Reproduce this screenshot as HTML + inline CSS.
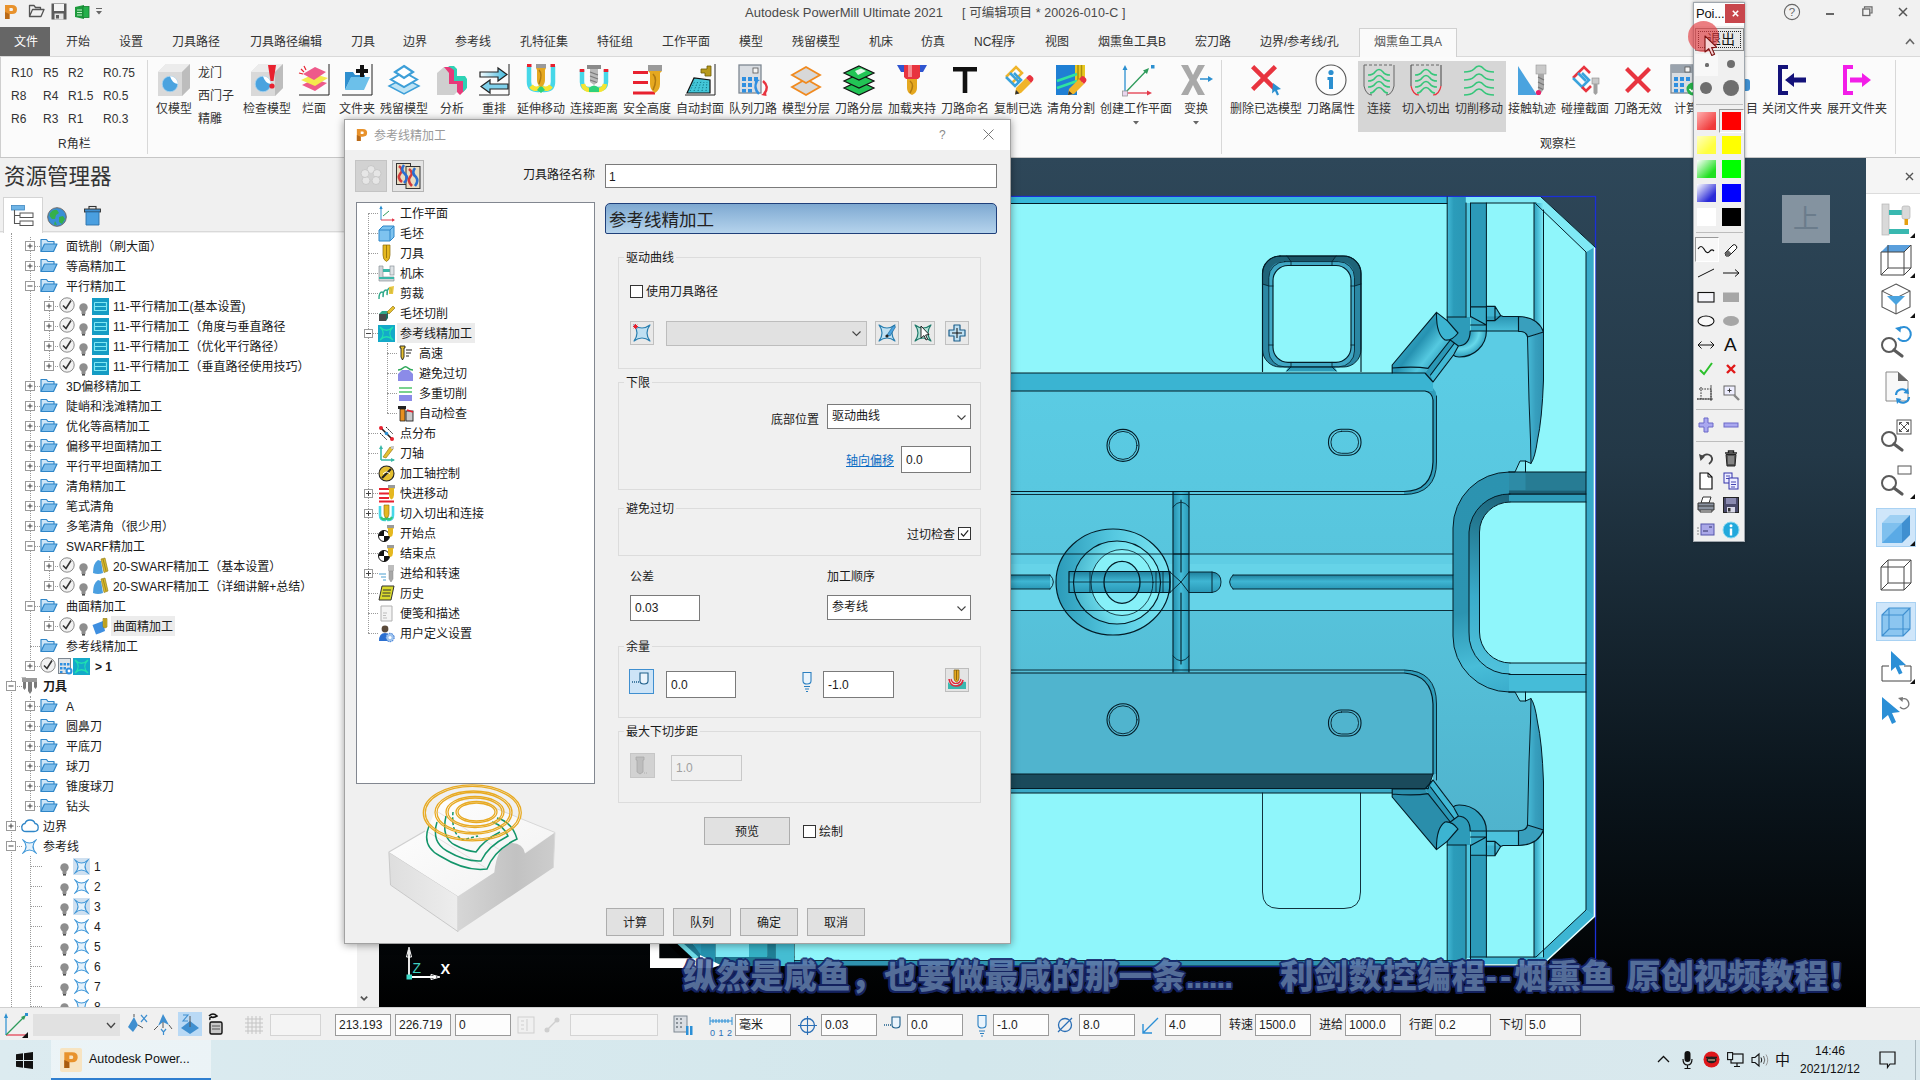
<!DOCTYPE html>
<html lang="zh-CN"><head><meta charset="utf-8"><title>Autodesk PowerMill Ultimate 2021</title>
<style>
*{box-sizing:border-box}
html,body{margin:0;padding:0}
body{width:1920px;height:1080px;overflow:hidden;position:relative;background:#f0f0f0;font-family:"Liberation Sans","Noto Sans CJK SC",sans-serif;font-size:12px;color:#1a1a1a;line-height:1}
.a{position:absolute}
.t{position:absolute;white-space:nowrap;line-height:16px;height:16px}
svg{position:absolute;overflow:visible}
#titlebar{left:0;top:0;width:1920px;height:28px;background:#f1f1f1}
#tabrow{left:0;top:28px;width:1920px;height:29px;background:#f1f1f1;border-bottom:1px solid #d9d9d9}
#ribbon{left:0;top:57px;width:1920px;height:101px;background:#fbfbfb;border-bottom:1px solid #c6c6c6;box-shadow:inset 1px 0 0 #cfcfcf}
#gap{display:none}
#left{left:0;top:158px;width:379px;height:849px;background:#f0f0f0}
#tree{left:0;top:233px;width:376px;height:774px;background:#fff;overflow:hidden}
#viewport{left:379px;top:158px;width:1487px;height:849px;background:linear-gradient(#2e4759 0%,#233847 35%,#0a141b 75%,#000 100%);overflow:hidden}
#rtool{left:1866px;top:158px;width:54px;height:849px;background:#fff}
#status{left:0;top:1007px;width:1920px;height:33px;background:#f0f0f0;border-top:1px solid #d0d0d0}
#taskbar{left:0;top:1040px;width:1920px;height:40px;background:linear-gradient(90deg,#dcebf0,#d3e7ec 50%,#dbe9ee)}
#dialog{left:344px;top:119px;width:667px;height:825px;background:#f0f0f0;border:1px solid #a2a2a2;box-shadow:0 1px 8px rgba(0,0,0,.4)}

#dialog .t{margin-top:1px}

</style></head>
<body>
<div id="titlebar" class="a">
<svg style="left:4px;top:3px" width="14" height="17" viewBox="0 0 14 17"><path d="M1,16 V2 H8 Q13,2 13,6.5 Q13,11 8,11 H5.5 V16Z M5.5,5 V8 H8 Q9,8 9,6.5 Q9,5 8,5Z" fill="#e8922c" fill-rule="evenodd"/><path d="M1,16 V9 L5.5,11 V16Z" fill="#b96a18"/></svg>
<svg style="left:28px;top:4px" width="17" height="14" viewBox="0 0 17 14"><path d="M1.5,12.5 V1.5 H6 L7.5,3.5 H12.5 V5.5 M1.5,12.5 L4.5,5.5 H16 L13,12.5Z" fill="none" stroke="#555" stroke-width="1.3" stroke-linejoin="round"/></svg>
<svg style="left:51px;top:3px" width="16" height="17" viewBox="0 0 16 17"><rect x="0.5" y="0.5" width="15" height="16" fill="#5b5b5b"/><rect x="3" y="1" width="10" height="7" fill="#f4f4f4"/><rect x="3.5" y="10.5" width="9" height="6" fill="#e4e4e4"/><rect x="5" y="12" width="3" height="3.5" fill="#5b5b5b"/></svg>
<svg style="left:74px;top:4px" width="16" height="16" viewBox="0 0 16 16"><path d="M1,3 L10,1 V15 L1,13Z" fill="#1d9a3c"/><rect x="9" y="2.5" width="6" height="11" fill="#23b04a" stroke="#167a2f" stroke-width=".8"/><path d="M3,6 H8 M3,8.5 H8 M3,11 H8" stroke="#bff0c8" stroke-width="1"/></svg>
<svg style="left:95px;top:8px" width="8" height="8" viewBox="0 0 8 8"><path d="M1,0.5 H7" stroke="#666" stroke-width="1"/><path d="M1,3 H7 L4,6.5Z" fill="#666"/></svg>
<div class="t" style="left:745px;top:5px;font-size:13px;color:#4a4a4a;letter-spacing:0">Autodesk PowerMill Ultimate 2021</div>
<div class="t" style="left:962px;top:5px;font-size:12.5px;color:#4a4a4a;letter-spacing:.1px">[ 可编辑项目 * 20026-010-C ]</div>
<svg style="left:1783px;top:3px" width="18" height="18" viewBox="0 0 18 18"><circle cx="9" cy="9" r="7.6" fill="none" stroke="#666" stroke-width="1.1"/><text x="9" y="13" text-anchor="middle" font-family="Liberation Sans,sans-serif" font-size="11.5" fill="#666">?</text></svg>
<div class="a" style="left:1826px;top:13px;width:8px;height:2px;background:#666"></div>
<svg style="left:1862px;top:6px" width="11" height="11" viewBox="0 0 11 11"><path d="M2.5,2.5 V0.8 H10 V7 H8.2" fill="none" stroke="#666" stroke-width="1.2"/><rect x="0.8" y="3" width="7" height="6.5" fill="none" stroke="#666" stroke-width="1.3"/></svg>
<svg style="left:1898px;top:7px" width="10" height="10" viewBox="0 0 10 10"><path d="M1,1 L9,9 M9,1 L1,9" stroke="#555" stroke-width="1.5"/></svg>
</div>
<div id="tabrow" class="a">
<div class="a" style="left:0;top:-1px;width:50px;height:29px;background:#666"></div>
<div class="a" style="left:1359px;top:0;width:98px;height:30px;background:#fafafa;border:1px solid #d0d0d0;border-bottom:none"></div>
<div class="t" style="left:14px;top:6px;color:#fff">文件</div>
<div class="t" style="left:66px;top:6px;color:#333">开始</div>
<div class="t" style="left:119px;top:6px;color:#333">设置</div>
<div class="t" style="left:172px;top:6px;color:#333">刀具路径</div>
<div class="t" style="left:250px;top:6px;color:#333">刀具路径编辑</div>
<div class="t" style="left:351px;top:6px;color:#333">刀具</div>
<div class="t" style="left:403px;top:6px;color:#333">边界</div>
<div class="t" style="left:455px;top:6px;color:#333">参考线</div>
<div class="t" style="left:520px;top:6px;color:#333">孔特征集</div>
<div class="t" style="left:597px;top:6px;color:#333">特征组</div>
<div class="t" style="left:662px;top:6px;color:#333">工作平面</div>
<div class="t" style="left:739px;top:6px;color:#333">模型</div>
<div class="t" style="left:792px;top:6px;color:#333">残留模型</div>
<div class="t" style="left:869px;top:6px;color:#333">机床</div>
<div class="t" style="left:921px;top:6px;color:#333">仿真</div>
<div class="t" style="left:974px;top:6px;color:#333">NC程序</div>
<div class="t" style="left:1045px;top:6px;color:#333">视图</div>
<div class="t" style="left:1098px;top:6px;color:#333">烟熏鱼工具B</div>
<div class="t" style="left:1195px;top:6px;color:#333">宏刀路</div>
<div class="t" style="left:1260px;top:6px;color:#333">边界/参考线/孔</div>
<div class="t" style="left:1374px;top:6px;color:#555">烟熏鱼工具A</div>
<svg style="left:1905px;top:10px" width="10" height="7" viewBox="0 0 10 7"><path d="M1,6 L5,1.5 L9,6" fill="none" stroke="#666" stroke-width="1.6"/></svg>
</div>
<div id="ribbon" class="a">
<div class="a" style="left:1358px;top:4px;width:148px;height:71px;background:#d6d6d6"></div>
<div class="t" style="left:11px;top:8px;color:#333">R10</div>
<div class="t" style="left:43px;top:8px;color:#333">R5</div>
<div class="t" style="left:68px;top:8px;color:#333">R2</div>
<div class="t" style="left:103px;top:8px;color:#333">R0.75</div>
<div class="t" style="left:11px;top:31px;color:#333">R8</div>
<div class="t" style="left:43px;top:31px;color:#333">R4</div>
<div class="t" style="left:68px;top:31px;color:#333">R1.5</div>
<div class="t" style="left:103px;top:31px;color:#333">R0.5</div>
<div class="t" style="left:11px;top:54px;color:#333">R6</div>
<div class="t" style="left:43px;top:54px;color:#333">R3</div>
<div class="t" style="left:68px;top:54px;color:#333">R1</div>
<div class="t" style="left:103px;top:54px;color:#333">R0.3</div>
<div class="t" style="left:58px;top:79px;color:#333">R角栏</div>
<div class="a" style="left:147px;top:3px;width:1px;height:94px;background:#d8d8d8"></div>
<div class="a" style="left:1221px;top:3px;width:1px;height:94px;background:#d8d8d8"></div>
<div class="a" style="left:1895px;top:3px;width:1px;height:94px;background:#d8d8d8"></div>
<div class="t" style="left:198px;top:8px;color:#333">龙门</div>
<div class="t" style="left:198px;top:31px;color:#333">西门子</div>
<div class="t" style="left:198px;top:54px;color:#333">精雕</div>
<div class="t" style="left:1540px;top:79px;color:#333">观察栏</div>
<svg style="left:158px;top:7px" width="32" height="32" viewBox="0 0 32 32"><path d="M0,8 L8,0 H32 V24 L24,32 H0Z" fill="#d9d9d9"/><path d="M0,8 L8,0 H32 L24,8Z" fill="#ececec"/><path d="M24,8 L32,0 V24 L24,32Z" fill="#bdbdbd"/><circle cx="12" cy="20" r="7.8" fill="#4aa3df" stroke="#a8d4f0" stroke-width=".8"/><path d="M12,12.2 A7.8,7.8 0 0 1 19.8,20 Q14,19 12,12.2Z" fill="#fff"/></svg>
<div class="t" style="left:156px;top:44px;color:#333">仅模型</div>
<svg style="left:251px;top:7px" width="32" height="32" viewBox="0 0 32 32"><path d="M0,8 L8,0 H32 V24 L24,32 H0Z" fill="#d9d9d9"/><path d="M0,8 L8,0 H32 L24,8Z" fill="#ececec"/><path d="M24,8 L32,0 V24 L24,32Z" fill="#bdbdbd"/><circle cx="12" cy="20" r="7.8" fill="#4aa3df" stroke="#a8d4f0" stroke-width=".8"/><path d="M12,12.2 A7.8,7.8 0 0 1 19.8,20 Q14,19 12,12.2Z" fill="#fff"/><path d="M17,1 H25 L22.5,17 H19.5Z" fill="#e8212f"/><circle cx="21" cy="22" r="2.6" fill="#e8212f"/></svg>
<div class="t" style="left:243px;top:44px;color:#333">检查模型</div>
<svg style="left:298px;top:7px" width="32" height="32" viewBox="0 0 32 32"><path d="M4,21 L16,15 L29,19 L17,27Z" fill="#ee5a8a"/><path d="M3,16 L16,10 L30,14 L17,22Z" fill="#f5e94d"/><path d="M5,10 L17,3 L28,8 L16,16Z" fill="#ee5a8a"/><path d="M3,5 L6,8 M6,2 L8,6 M1,9 L5,10" stroke="#e8212f" stroke-width="1.2"/><path d="M31,0 V31 H1" stroke="#222" stroke-width="1" fill="none"/></svg>
<div class="t" style="left:302px;top:44px;color:#333">烂面</div>
<svg style="left:341px;top:7px" width="32" height="32" viewBox="0 0 32 32"><path d="M4,26 V8 H12 L14,11 H24 V14 H10 L4,26Z" fill="#2f8fcf"/><path d="M4,26 L10,13 H29 L23,26Z" fill="#6cc0ea"/><path d="M19,1 H23 V5 H27 V9 H23 V13 H19 V9 H15 V5 H19Z" fill="#111"/><path d="M31,0 V31 H1" stroke="#222" stroke-width="1" fill="none"/></svg>
<div class="t" style="left:339px;top:44px;color:#333">文件夹</div>
<svg style="left:388px;top:7px" width="32" height="32" viewBox="0 0 32 32"><path d="M16,14 L31,22 L16,30 L1,22Z" fill="#bfe4f5" stroke="#3d9fd8" stroke-width="1.5"/><path d="M16,8 L29,15.5 L16,23 L3,15.5Z" fill="#fff" stroke="#3d9fd8" stroke-width="2"/><path d="M16,2 L25,8 L16,14 L7,8Z" fill="#fff" stroke="#3d9fd8" stroke-width="2.2"/></svg>
<div class="t" style="left:380px;top:44px;color:#333">残留模型</div>
<svg style="left:436px;top:7px" width="32" height="32" viewBox="0 0 32 32"><path d="M1,9 L8,3 H16 V14 H25 V24 L18,31 H1Z" fill="#cfcfcf"/><path d="M8,3 H16 L19,6 V14 H27 L30,17 V25 L24,31 L21,28 V20 H13 V9 Z" fill="#e83a7a"/><path d="M12,2 H18 L21,5 V12 H29 L31,15 V24 L27,28 V17 H18 V6Z" fill="#2ed3b5"/></svg>
<div class="t" style="left:440px;top:44px;color:#333">分析</div>
<svg style="left:478px;top:7px" width="32" height="32" viewBox="0 0 32 32"><defs><linearGradient id="gArr" x1="0" y1="0" x2="1" y2="0"><stop offset="0" stop-color="#f4fcff"/><stop offset="1" stop-color="#3fb8dc"/></linearGradient></defs><path d="M2,8 H20 V4 L29,10.5 L20,17 V13 H2Z" fill="url(#gArr)" stroke="#222" stroke-width="1.2"/><path d="M30,20 H12 V16 L3,22.5 L12,29 V25 H30Z" fill="#7fd0ea" stroke="#222" stroke-width="1.2"/><path d="M31,0 V31 H1" stroke="#222" stroke-width="1" fill="none"/></svg>
<div class="t" style="left:482px;top:44px;color:#333">重排</div>
<svg style="left:525px;top:7px" width="32" height="32" viewBox="0 0 32 32"><path d="M4,2 V18 Q4,26 13,26 L16,22 L19,26 Q28,26 28,18 V2" fill="none" stroke="#46d7e8" stroke-width="4.5"/><path d="M6,22 Q10,27 16,23 Q22,27 26,22" fill="none" stroke="#f5e431" stroke-width="4.5"/><path d="M12,26 L16,21 L20,26 L16,29Z" fill="#2fd27a"/><rect x="2" y="0" width="4.5" height="3" fill="#e8212f"/><rect x="25.5" y="0" width="4.5" height="3" fill="#e8212f"/><path d="M11,0 H21 V4 L20,6 V16 Q20,21 16,23 Q12,21 12,16 V6 L11,4Z" fill="#e5a820"/><path d="M14,6 Q18,10 14,20" stroke="#b07a10" stroke-width="1.5" fill="none"/><rect x="11" y="0" width="10" height="4" fill="#9a9a9a"/></svg>
<div class="t" style="left:517px;top:44px;color:#333">延伸移动</div>
<svg style="left:578px;top:7px" width="32" height="32" viewBox="0 0 32 32"><path d="M4,6 V18 Q4,25 11,25 H21 Q28,25 28,18 V6" fill="none" stroke="#46d7e8" stroke-width="4.5"/><path d="M5,20 Q6,26 12,26 H20 Q26,26 27,20" fill="none" stroke="#f5e431" stroke-width="4.5"/><path d="M11,24 Q16,19 21,24 L21,28 H11Z" fill="#2fd27a"/><rect x="1.7" y="5" width="4.6" height="3" fill="#e8212f"/><rect x="25.7" y="5" width="4.6" height="3" fill="#e8212f"/><rect x="9" y="1" width="14" height="4" fill="#8a8a8a"/><path d="M12,5 H20 V18 L16,21 L12,18Z" fill="#b9b9b9"/><path d="M12,8 L20,11 M12,12 L20,15 M12,16 L19,18.5" stroke="#7a7a7a" stroke-width="1.3"/></svg>
<div class="t" style="left:570px;top:44px;color:#333">连接距离</div>
<svg style="left:631px;top:7px" width="32" height="32" viewBox="0 0 32 32"><path d="M2,8.5 H17 M2,18.5 H17 M2,29 H24" stroke="#e8212f" stroke-width="3.2"/><path d="M17,1 H31 V7 L29,9 V20 Q29,26 24,29 Q19,26 19,20 V9 L17,7Z" fill="#e5a820"/><path d="M22,10 Q27,15 22,26" stroke="#b07a10" stroke-width="1.6" fill="none"/><rect x="17" y="1" width="14" height="6" fill="#9a9a9a"/></svg>
<div class="t" style="left:623px;top:44px;color:#333">安全高度</div>
<svg style="left:684px;top:7px" width="32" height="32" viewBox="0 0 32 32"><path d="M3,29 L10,14 L26,16 V29Z" fill="#43c6d8" stroke="#111" stroke-width="1.2"/><path d="M6,27 L11,17 M10,27 L14,17 M14,27 L17,17.5 M18,27 L20,18 M22,27 L23,18" stroke="#0d6f80" stroke-width="1" stroke-dasharray="1.2 1.6"/><path d="M17,5 H23 V2 H27 V12 H21 V9 H17Z" fill="#b89a1c" stroke="#6d5a08" stroke-width=".8"/><path d="M31,0 V31 H1" stroke="#222" stroke-width="1" fill="none"/></svg>
<div class="t" style="left:676px;top:44px;color:#333">自动封面</div>
<svg style="left:737px;top:7px" width="32" height="32" viewBox="0 0 32 32"><rect x="2" y="1" width="22" height="28" fill="#d9dde2" stroke="#7d8791" stroke-width="1.3"/><rect x="16" y="4" width="5" height="5" fill="#f4f4f4" stroke="#555" stroke-width=".8"/><g fill="#2f8fe0"><rect x="5" y="13" width="4" height="4"/><rect x="11" y="13" width="4" height="4"/><rect x="17" y="13" width="4" height="4"/><rect x="5" y="19" width="4" height="4"/><rect x="11" y="19" width="4" height="4"/><rect x="5" y="25" width="4" height="3.5"/><rect x="11" y="25" width="4" height="3.5"/></g><path d="M20,17 Q16,24 22,30" fill="none" stroke="#2f8fe0" stroke-width="2.4"/><path d="M26,17 Q33,23 27,30" fill="none" stroke="#e8343f" stroke-width="2.4"/><path d="M24,31 L29,27.5 L29.5,32Z" fill="#e8343f"/><path d="M23,16 L18,19.5 L17.5,15Z" fill="#2f8fe0"/></svg>
<div class="t" style="left:729px;top:44px;color:#333">队列刀路</div>
<svg style="left:790px;top:7px" width="32" height="32" viewBox="0 0 32 32"><path d="M16,15 L30,23 L16,31 L2,23Z" fill="#d8d8d8" stroke="#f08a1f" stroke-width="1.8"/><path d="M16,3 L30,11 L16,19 L2,11Z" fill="#d8d8d8" stroke="#f08a1f" stroke-width="1.8"/></svg>
<div class="t" style="left:782px;top:44px;color:#333">模型分层</div>
<svg style="left:843px;top:7px" width="32" height="32" viewBox="0 0 32 32"><path d="M16,17 L31,24 L16,31 L1,24Z" fill="#22c455" stroke="#111" stroke-width="1.2"/><path d="M16,10 L31,17 L16,24 L1,17Z" fill="#22c455" stroke="#111" stroke-width="1.2"/><path d="M16,2 L31,9 L16,16 L1,9Z" fill="#22c455" stroke="#111" stroke-width="1.2"/><path d="M12,7 L18,4.5 L23,7 L15,11Z" fill="#fff" opacity=".85"/></svg>
<div class="t" style="left:835px;top:44px;color:#333">刀路分层</div>
<svg style="left:896px;top:7px" width="32" height="32" viewBox="0 0 32 32"><path d="M1,1 H31 L27,8 H23 V14 H9 V8 H5Z" fill="#2f55d0"/><path d="M8,1 H24 V13 L22,15 H10 L8,13Z" fill="#e8343f"/><path d="M12,1 H16 V13 H12Z" fill="#f58a8f"/><path d="M11,15 H21 V24 Q21,29 16,31 Q11,29 11,24Z" fill="#e5a820"/><path d="M14,17 Q19,21 14,29" stroke="#b07a10" stroke-width="1.5" fill="none"/></svg>
<div class="t" style="left:888px;top:44px;color:#333">加载夹持</div>
<svg style="left:949px;top:7px" width="32" height="32" viewBox="0 0 32 32"><path d="M4,3 H28 V7.5 H18.3 V29 H13.7 V7.5 H4Z" fill="#111"/></svg>
<div class="t" style="left:941px;top:44px;color:#333">刀路命名</div>
<svg style="left:1002px;top:7px" width="32" height="32" viewBox="0 0 32 32"><g fill="none" stroke-width="2.6"><path d="M4,13 L14,3 L20,9 L10,19" stroke="#f0b429"/><path d="M4,13 L13,22 L19,16 L12,9" stroke="#3aa3dc"/><path d="M8,9 L17,18" stroke="#3aa3dc"/></g><path d="M14,24 L24,14 L29,19 L19,29 L13,30.5Z" fill="#f0b429"/><path d="M24,14 L26.5,11.5 Q28,10.5 29.5,12 L31,13.5 Q32,15 31,16.5 L29,19Z" fill="#e8343f"/><path d="M13,30.5 L14,26 L17.5,29.5Z" fill="#333"/></svg>
<div class="t" style="left:994px;top:44px;color:#333">复制已选</div>
<svg style="left:1055px;top:7px" width="32" height="32" viewBox="0 0 32 32"><path d="M1,1 H22 V31 H1Z" fill="#1f7fd4"/><path d="M20,1 H30 V18 H20Z" fill="#e8c820"/><path d="M23,1 V18 M26.5,1 V18" stroke="#a88e10" stroke-width="1.5"/><path d="M2,17 L22,10 M2,24 L22,17" stroke="#2fe3a0" stroke-width="2.4"/><path d="M14,25 L24,15 L29,20 L19,30 L13,31Z" fill="#f0b429"/><path d="M24,15 L26.5,12.5 Q28,11.5 29.5,13 L31,14.5 Q32,16 31,17.5 L29,20Z" fill="#e8343f"/><path d="M13,31 L14,27 L17.5,30Z" fill="#333"/></svg>
<div class="t" style="left:1047px;top:44px;color:#333">清角分割</div>
<svg style="left:1120px;top:7px" width="32" height="32" viewBox="0 0 32 32"><path d="M5,29 V3" stroke="#2b8fd0" stroke-width="1.3"/><path d="M2.5,6 L5,1 L7.5,6Z" fill="#2b8fd0"/><path d="M5,29 H30" stroke="#e33a4b" stroke-width="1.3"/><path d="M27,26.5 L32,29 L27,31.5Z" fill="#e33a4b"/><path d="M5,29 L27,6" stroke="#2e9b5b" stroke-width="1.3"/><path d="M23,6.5 L29,4 L27,10Z" fill="#2e9b5b"/><rect x="31" y="1" width="3.5" height="3.5" fill="#2b8fd0"/><rect x="2.5" y="27" width="5" height="5" fill="#e9d6ee" stroke="#999" stroke-width=".8"/></svg>
<div class="t" style="left:1100px;top:44px;color:#333">创建工作平面</div>
<svg style="left:1180px;top:7px" width="32" height="32" viewBox="0 0 32 32"><path d="M1,1 H8 L13,11 L18,1 H25 L16.5,16 L25,31 H18 L13,21 L8,31 H1 L9.5,16Z" fill="#a9a9a9"/><path d="M20,15 H30" stroke="#2b8fd0" stroke-width="1.5"/><path d="M28,12 L33,15 L28,18Z" fill="#2b8fd0"/></svg>
<div class="t" style="left:1184px;top:44px;color:#333">变换</div>
<svg style="left:1250px;top:7px" width="32" height="32" viewBox="0 0 32 32"><path d="M3,3.2 L6.2,0 L16,9.8 L25.8,0 L29,3.2 L19.2,13 L29,22.8 L25.8,26 L16,16.2 L6.2,26 L3,22.8 L12.8,13Z" fill="#e8343f" transform="translate(-2,1)"/><path d="M23,19 L31,25 L27,26 L29,30.5 L27,31.5 L25,27 L22,29.5Z" fill="#2b8fd0"/></svg>
<div class="t" style="left:1230px;top:44px;color:#333">删除已选模型</div>
<svg style="left:1315px;top:7px" width="32" height="32" viewBox="0 0 32 32"><circle cx="16" cy="16" r="15" fill="#fdfdfd" stroke="#555" stroke-width="1.1"/><circle cx="16" cy="8.5" r="2.6" fill="#2b8fd0"/><path d="M12.5,13 H18 V25 H14 V16 H12.5Z" fill="#2b8fd0"/></svg>
<div class="t" style="left:1307px;top:44px;color:#333">刀路属性</div>
<svg style="left:1363px;top:7px" width="32" height="32" viewBox="0 0 32 32"><path d="M1,1 H31" stroke="#666" stroke-width="1" stroke-dasharray="3 2"/><path d="M1,1 V22 Q3,31 9,31 M31,1 V22 Q29,31 23,31" fill="none" stroke="#666" stroke-width="1"/><g fill="none" stroke="#35c67a" stroke-width="1.6"><path d="M5,11 Q10,11 12,8 Q16,3 20,8 Q22,11 27,11"/><path d="M5,17 Q10,17 12,14 Q16,9 20,14 Q22,17 27,17"/><path d="M5,23 Q10,23 12,20 Q16,15 20,20 Q22,23 27,23"/><path d="M7,29 Q10,29 12,26 Q16,21 20,26 Q22,29 25,29"/></g></svg>
<div class="t" style="left:1367px;top:44px;color:#333">连接</div>
<svg style="left:1410px;top:7px" width="32" height="32" viewBox="0 0 32 32"><path d="M1,1 H31" stroke="#666" stroke-width="1" stroke-dasharray="3 2"/><path d="M1,1 V22 M31,1 V22" stroke="#444" stroke-width="1"/><path d="M1,22 Q3,31 9,31 M31,22 Q29,31 23,31" fill="none" stroke="#e8343f" stroke-width="1.2"/><g fill="none" stroke="#35c67a" stroke-width="1.6"><path d="M5,11 Q10,11 12,8 Q16,3 20,8 Q22,11 27,11"/><path d="M5,17 Q10,17 12,14 Q16,9 20,14 Q22,17 27,17"/><path d="M5,23 Q10,23 12,20 Q16,15 20,20 Q22,23 27,23"/><path d="M7,29 Q10,29 12,26 Q16,21 20,26 Q22,29 25,29"/></g></svg>
<div class="t" style="left:1402px;top:44px;color:#333">切入切出</div>
<svg style="left:1463px;top:7px" width="32" height="32" viewBox="0 0 32 32"><g fill="none" stroke="#35c67a" stroke-width="1.6"><path d="M1,8 Q8,8 11,5 Q16,-1 21,5 Q24,8 31,8"/><path d="M1,16 Q8,16 11,13 Q16,7 21,13 Q24,16 31,16"/><path d="M1,24 Q8,24 11,21 Q16,15 21,21 Q24,24 31,24"/><path d="M1,31 Q8,31 11,28 Q16,22 21,28 Q24,31 31,31"/></g></svg>
<div class="t" style="left:1455px;top:44px;color:#333">切削移动</div>
<svg style="left:1516px;top:7px" width="32" height="32" viewBox="0 0 32 32"><path d="M2,2 L21,31 H2Z" fill="#4aa3df"/><rect x="20" y="1" width="10" height="9" fill="#c9c9c9" stroke="#999" stroke-width=".6"/><path d="M22,10 H28 V25 L25,29 L22,25Z" fill="#a8a8a8"/><path d="M22,13 L28,16 M22,18 L28,21 M22,23 L27,25.5" stroke="#777" stroke-width="1.2"/><circle cx="22.5" cy="28.5" r="2.6" fill="#e8216a"/></svg>
<div class="t" style="left:1508px;top:44px;color:#333">接触轨迹</div>
<svg style="left:1569px;top:7px" width="32" height="32" viewBox="0 0 32 32"><g fill="none" stroke-width="2.6"><path d="M4,14 L15,3 L21,9" stroke="#e8343f"/><path d="M4,14 L13,23 L20,16 L13,9" stroke="#3aa3dc"/><path d="M9,9 L17,17" stroke="#3aa3dc"/><path d="M13,23 L17,27 L22,22" stroke="#e8343f"/></g><rect x="23" y="14" width="7" height="6" fill="#c9c9c9" stroke="#888" stroke-width=".6"/><path d="M24.5,20 H28.5 V29 L26.5,31 L24.5,29Z" fill="#a0a0a0"/></svg>
<div class="t" style="left:1561px;top:44px;color:#333">碰撞截面</div>
<svg style="left:1622px;top:7px" width="32" height="32" viewBox="0 0 32 32"><path d="M3,6 L6,3 L16,13 L26,3 L29,6 L19,16 L29,26 L26,29 L16,19 L6,29 L3,26 L13,16Z" fill="#e8343f"/></svg>
<div class="t" style="left:1614px;top:44px;color:#333">刀路无效</div>
<svg style="left:1669px;top:7px" width="32" height="32" viewBox="0 0 32 32"><rect x="2" y="1" width="22" height="28" fill="#d9dde2" stroke="#7d8791" stroke-width="1.3"/><rect x="2" y="1" width="22" height="8" fill="#9aa3ad"/><rect x="16" y="3" width="5" height="5" fill="#f4f4f4" stroke="#555" stroke-width=".8"/><g fill="#2f8fe0"><rect x="5" y="13" width="4" height="4"/><rect x="11" y="13" width="4" height="4"/><rect x="17" y="13" width="4" height="4"/><rect x="5" y="19" width="4" height="4"/><rect x="11" y="19" width="4" height="4"/><rect x="5" y="25" width="4" height="3.5"/><rect x="11" y="25" width="4" height="3.5"/></g><circle cx="24" cy="25" r="6.5" fill="#27b04a"/><path d="M20.5,25 L23,27.5 L27.5,22.5" stroke="#fff" stroke-width="1.6" fill="none"/></svg>
<div class="t" style="left:1674px;top:44px;color:#333">计算</div>
<svg style="left:1776px;top:7px" width="32" height="32" viewBox="0 0 32 32"><path d="M12,3 H4 V29 H12" fill="none" stroke="#14127a" stroke-width="4"/><path d="M30,13.5 H18 V9 L9,16 L18,23 V18.5 H30Z" fill="#14127a"/></svg>
<div class="t" style="left:1762px;top:44px;color:#333">关闭文件夹</div>
<svg style="left:1841px;top:7px" width="32" height="32" viewBox="0 0 32 32"><path d="M12,3 H4 V29 H12" fill="none" stroke="#f21ee8" stroke-width="4"/><path d="M9,13.5 H21 V9 L30,16 L21,23 V18.5 H9Z" fill="#f21ee8"/></svg>
<div class="t" style="left:1827px;top:44px;color:#333">展开文件夹</div>
<div class="t" style="left:1746px;top:44px;color:#333">目</div>
<div class="a" style="left:1745px;top:22px;width:5px;height:12px;background:#3f8fd0;border-radius:0 3px 3px 0"></div>
<svg style="left:1133px;top:64px" width="6" height="4" viewBox="0 0 6 4"><path d="M0,0 H6 L3,3.5Z" fill="#666"/></svg>
<svg style="left:1193px;top:64px" width="6" height="4" viewBox="0 0 6 4"><path d="M0,0 H6 L3,3.5Z" fill="#666"/></svg>
</div>
<div id="gap" class="a"></div>
<div id="left" class="a">
<div class="t" style="left:4px;top:3.5px;font-size:21.5px;line-height:30px;height:30px;color:#333">资源管理器</div>
<div class="a" style="left:0;top:73px;width:375px;height:1px;background:#d9d9d9"></div>
<div class="a" style="left:3px;top:39px;width:40px;height:36px;background:#fff;border:1px solid #d4d4d4;border-bottom:none"></div>
<svg style="left:11px;top:47px" width="23" height="22" viewBox="0 0 23 22"><rect x="0.5" y="0.5" width="13" height="4.5" fill="#6fb4e6" stroke="#3f87c0" stroke-width=".8"/><path d="M3.5,5 V18.5 H9 M3.5,10.5 H9" fill="none" stroke="#555" stroke-width="1.1"/><rect x="9" y="8" width="13" height="4.5" fill="#fff" stroke="#555" stroke-width="1"/><rect x="9" y="16" width="13" height="4.5" fill="#fff" stroke="#555" stroke-width="1"/></svg>
<svg style="left:47px;top:49px" width="20" height="20" viewBox="0 0 20 20"><circle cx="10" cy="10" r="9.3" fill="#3a8fd6" stroke="#6a6a6a" stroke-width="1"/><path d="M3,6 Q6,2 10,3 L12,6 L9,8 L8,12 L5,12 L2.5,9Z M12,10 L16,9 L18,12 L15,17 L12,15Z M8,14 L10,18 L7,17.5Z" fill="#35b04a"/></svg>
<svg style="left:84px;top:48px" width="17" height="20" viewBox="0 0 17 20"><rect x="5" y="0.5" width="7" height="3" fill="none" stroke="#333" stroke-width="1.1"/><rect x="0.5" y="3" width="16" height="3" fill="#3f8fd0" stroke="#333" stroke-width=".9"/><path d="M2,6 H15 V19 H2Z" fill="#4a9fe0" stroke="#2a6fa8" stroke-width=".9"/></svg>
</div>
<div id="tree" class="a">
<div class="a" style="left:11px;top:0px;width:0;height:776px;border-left:1px dotted #9a9a9a"></div>
<div class="a" style="left:30px;top:4px;width:0;height:429px;border-left:1px dotted #9a9a9a"></div>
<div class="a" style="left:49px;top:63px;width:0;height:70px;border-left:1px dotted #9a9a9a"></div>
<div class="a" style="left:49px;top:323px;width:0;height:30px;border-left:1px dotted #9a9a9a"></div>
<div class="a" style="left:49px;top:383px;width:0;height:10px;border-left:1px dotted #9a9a9a"></div>
<div class="a" style="left:30px;top:463px;width:0;height:110px;border-left:1px dotted #9a9a9a"></div>
<div class="a" style="left:30px;top:623px;width:0;height:153px;border-left:1px dotted #9a9a9a"></div>
<div class="a" style="left:30px;top:13px;width:10px;height:0;border-top:1px dotted #9a9a9a"></div>
<svg style="left:25px;top:8px" width="10" height="10" viewBox="0 0 10 10"><rect x="0.5" y="0.5" width="9" height="9" fill="#fff" stroke="#9a9a9a"/><path d="M2.5,5 H7.5" stroke="#444"/><path d="M5,2.5 V7.5" stroke="#444"/></svg>
<svg style="left:40px;top:5px" width="18" height="15" viewBox="0 0 18 15"><path d="M1,13.5 V1.5 H6.5 L8,3.5 H14 V6" fill="#cfe6f8" stroke="#2f86c8" stroke-width="1.2" stroke-linejoin="round"/><path d="M1,13.5 L4.5,6 H17 L13.5,13.5Z" fill="#7ebdeb" stroke="#2f86c8" stroke-width="1.2" stroke-linejoin="round"/></svg>
<div class="t" style="left:66px;top:6px;color:#1a1a1a">面铣削（刷大面）</div>
<div class="a" style="left:30px;top:33px;width:10px;height:0;border-top:1px dotted #9a9a9a"></div>
<svg style="left:25px;top:28px" width="10" height="10" viewBox="0 0 10 10"><rect x="0.5" y="0.5" width="9" height="9" fill="#fff" stroke="#9a9a9a"/><path d="M2.5,5 H7.5" stroke="#444"/><path d="M5,2.5 V7.5" stroke="#444"/></svg>
<svg style="left:40px;top:25px" width="18" height="15" viewBox="0 0 18 15"><path d="M1,13.5 V1.5 H6.5 L8,3.5 H14 V6" fill="#cfe6f8" stroke="#2f86c8" stroke-width="1.2" stroke-linejoin="round"/><path d="M1,13.5 L4.5,6 H17 L13.5,13.5Z" fill="#7ebdeb" stroke="#2f86c8" stroke-width="1.2" stroke-linejoin="round"/></svg>
<div class="t" style="left:66px;top:26px;color:#1a1a1a">等高精加工</div>
<div class="a" style="left:30px;top:53px;width:10px;height:0;border-top:1px dotted #9a9a9a"></div>
<svg style="left:25px;top:48px" width="10" height="10" viewBox="0 0 10 10"><rect x="0.5" y="0.5" width="9" height="9" fill="#fff" stroke="#9a9a9a"/><path d="M2.5,5 H7.5" stroke="#444"/></svg>
<svg style="left:40px;top:45px" width="18" height="15" viewBox="0 0 18 15"><path d="M1,13.5 V1.5 H6.5 L8,3.5 H14 V6" fill="#cfe6f8" stroke="#2f86c8" stroke-width="1.2" stroke-linejoin="round"/><path d="M1,13.5 L4.5,6 H17 L13.5,13.5Z" fill="#7ebdeb" stroke="#2f86c8" stroke-width="1.2" stroke-linejoin="round"/></svg>
<div class="t" style="left:66px;top:46px;color:#1a1a1a">平行精加工</div>
<div class="a" style="left:30px;top:153px;width:10px;height:0;border-top:1px dotted #9a9a9a"></div>
<svg style="left:25px;top:148px" width="10" height="10" viewBox="0 0 10 10"><rect x="0.5" y="0.5" width="9" height="9" fill="#fff" stroke="#9a9a9a"/><path d="M2.5,5 H7.5" stroke="#444"/><path d="M5,2.5 V7.5" stroke="#444"/></svg>
<svg style="left:40px;top:145px" width="18" height="15" viewBox="0 0 18 15"><path d="M1,13.5 V1.5 H6.5 L8,3.5 H14 V6" fill="#cfe6f8" stroke="#2f86c8" stroke-width="1.2" stroke-linejoin="round"/><path d="M1,13.5 L4.5,6 H17 L13.5,13.5Z" fill="#7ebdeb" stroke="#2f86c8" stroke-width="1.2" stroke-linejoin="round"/></svg>
<div class="t" style="left:66px;top:146px;color:#1a1a1a">3D偏移精加工</div>
<div class="a" style="left:30px;top:173px;width:10px;height:0;border-top:1px dotted #9a9a9a"></div>
<svg style="left:25px;top:168px" width="10" height="10" viewBox="0 0 10 10"><rect x="0.5" y="0.5" width="9" height="9" fill="#fff" stroke="#9a9a9a"/><path d="M2.5,5 H7.5" stroke="#444"/><path d="M5,2.5 V7.5" stroke="#444"/></svg>
<svg style="left:40px;top:165px" width="18" height="15" viewBox="0 0 18 15"><path d="M1,13.5 V1.5 H6.5 L8,3.5 H14 V6" fill="#cfe6f8" stroke="#2f86c8" stroke-width="1.2" stroke-linejoin="round"/><path d="M1,13.5 L4.5,6 H17 L13.5,13.5Z" fill="#7ebdeb" stroke="#2f86c8" stroke-width="1.2" stroke-linejoin="round"/></svg>
<div class="t" style="left:66px;top:166px;color:#1a1a1a">陡峭和浅滩精加工</div>
<div class="a" style="left:30px;top:193px;width:10px;height:0;border-top:1px dotted #9a9a9a"></div>
<svg style="left:25px;top:188px" width="10" height="10" viewBox="0 0 10 10"><rect x="0.5" y="0.5" width="9" height="9" fill="#fff" stroke="#9a9a9a"/><path d="M2.5,5 H7.5" stroke="#444"/><path d="M5,2.5 V7.5" stroke="#444"/></svg>
<svg style="left:40px;top:185px" width="18" height="15" viewBox="0 0 18 15"><path d="M1,13.5 V1.5 H6.5 L8,3.5 H14 V6" fill="#cfe6f8" stroke="#2f86c8" stroke-width="1.2" stroke-linejoin="round"/><path d="M1,13.5 L4.5,6 H17 L13.5,13.5Z" fill="#7ebdeb" stroke="#2f86c8" stroke-width="1.2" stroke-linejoin="round"/></svg>
<div class="t" style="left:66px;top:186px;color:#1a1a1a">优化等高精加工</div>
<div class="a" style="left:30px;top:213px;width:10px;height:0;border-top:1px dotted #9a9a9a"></div>
<svg style="left:25px;top:208px" width="10" height="10" viewBox="0 0 10 10"><rect x="0.5" y="0.5" width="9" height="9" fill="#fff" stroke="#9a9a9a"/><path d="M2.5,5 H7.5" stroke="#444"/><path d="M5,2.5 V7.5" stroke="#444"/></svg>
<svg style="left:40px;top:205px" width="18" height="15" viewBox="0 0 18 15"><path d="M1,13.5 V1.5 H6.5 L8,3.5 H14 V6" fill="#cfe6f8" stroke="#2f86c8" stroke-width="1.2" stroke-linejoin="round"/><path d="M1,13.5 L4.5,6 H17 L13.5,13.5Z" fill="#7ebdeb" stroke="#2f86c8" stroke-width="1.2" stroke-linejoin="round"/></svg>
<div class="t" style="left:66px;top:206px;color:#1a1a1a">偏移平坦面精加工</div>
<div class="a" style="left:30px;top:233px;width:10px;height:0;border-top:1px dotted #9a9a9a"></div>
<svg style="left:25px;top:228px" width="10" height="10" viewBox="0 0 10 10"><rect x="0.5" y="0.5" width="9" height="9" fill="#fff" stroke="#9a9a9a"/><path d="M2.5,5 H7.5" stroke="#444"/><path d="M5,2.5 V7.5" stroke="#444"/></svg>
<svg style="left:40px;top:225px" width="18" height="15" viewBox="0 0 18 15"><path d="M1,13.5 V1.5 H6.5 L8,3.5 H14 V6" fill="#cfe6f8" stroke="#2f86c8" stroke-width="1.2" stroke-linejoin="round"/><path d="M1,13.5 L4.5,6 H17 L13.5,13.5Z" fill="#7ebdeb" stroke="#2f86c8" stroke-width="1.2" stroke-linejoin="round"/></svg>
<div class="t" style="left:66px;top:226px;color:#1a1a1a">平行平坦面精加工</div>
<div class="a" style="left:30px;top:253px;width:10px;height:0;border-top:1px dotted #9a9a9a"></div>
<svg style="left:25px;top:248px" width="10" height="10" viewBox="0 0 10 10"><rect x="0.5" y="0.5" width="9" height="9" fill="#fff" stroke="#9a9a9a"/><path d="M2.5,5 H7.5" stroke="#444"/><path d="M5,2.5 V7.5" stroke="#444"/></svg>
<svg style="left:40px;top:245px" width="18" height="15" viewBox="0 0 18 15"><path d="M1,13.5 V1.5 H6.5 L8,3.5 H14 V6" fill="#cfe6f8" stroke="#2f86c8" stroke-width="1.2" stroke-linejoin="round"/><path d="M1,13.5 L4.5,6 H17 L13.5,13.5Z" fill="#7ebdeb" stroke="#2f86c8" stroke-width="1.2" stroke-linejoin="round"/></svg>
<div class="t" style="left:66px;top:246px;color:#1a1a1a">清角精加工</div>
<div class="a" style="left:30px;top:273px;width:10px;height:0;border-top:1px dotted #9a9a9a"></div>
<svg style="left:25px;top:268px" width="10" height="10" viewBox="0 0 10 10"><rect x="0.5" y="0.5" width="9" height="9" fill="#fff" stroke="#9a9a9a"/><path d="M2.5,5 H7.5" stroke="#444"/><path d="M5,2.5 V7.5" stroke="#444"/></svg>
<svg style="left:40px;top:265px" width="18" height="15" viewBox="0 0 18 15"><path d="M1,13.5 V1.5 H6.5 L8,3.5 H14 V6" fill="#cfe6f8" stroke="#2f86c8" stroke-width="1.2" stroke-linejoin="round"/><path d="M1,13.5 L4.5,6 H17 L13.5,13.5Z" fill="#7ebdeb" stroke="#2f86c8" stroke-width="1.2" stroke-linejoin="round"/></svg>
<div class="t" style="left:66px;top:266px;color:#1a1a1a">笔式清角</div>
<div class="a" style="left:30px;top:293px;width:10px;height:0;border-top:1px dotted #9a9a9a"></div>
<svg style="left:25px;top:288px" width="10" height="10" viewBox="0 0 10 10"><rect x="0.5" y="0.5" width="9" height="9" fill="#fff" stroke="#9a9a9a"/><path d="M2.5,5 H7.5" stroke="#444"/><path d="M5,2.5 V7.5" stroke="#444"/></svg>
<svg style="left:40px;top:285px" width="18" height="15" viewBox="0 0 18 15"><path d="M1,13.5 V1.5 H6.5 L8,3.5 H14 V6" fill="#cfe6f8" stroke="#2f86c8" stroke-width="1.2" stroke-linejoin="round"/><path d="M1,13.5 L4.5,6 H17 L13.5,13.5Z" fill="#7ebdeb" stroke="#2f86c8" stroke-width="1.2" stroke-linejoin="round"/></svg>
<div class="t" style="left:66px;top:286px;color:#1a1a1a">多笔清角（很少用）</div>
<div class="a" style="left:30px;top:313px;width:10px;height:0;border-top:1px dotted #9a9a9a"></div>
<svg style="left:25px;top:308px" width="10" height="10" viewBox="0 0 10 10"><rect x="0.5" y="0.5" width="9" height="9" fill="#fff" stroke="#9a9a9a"/><path d="M2.5,5 H7.5" stroke="#444"/></svg>
<svg style="left:40px;top:305px" width="18" height="15" viewBox="0 0 18 15"><path d="M1,13.5 V1.5 H6.5 L8,3.5 H14 V6" fill="#cfe6f8" stroke="#2f86c8" stroke-width="1.2" stroke-linejoin="round"/><path d="M1,13.5 L4.5,6 H17 L13.5,13.5Z" fill="#7ebdeb" stroke="#2f86c8" stroke-width="1.2" stroke-linejoin="round"/></svg>
<div class="t" style="left:66px;top:306px;color:#1a1a1a">SWARF精加工</div>
<div class="a" style="left:30px;top:373px;width:10px;height:0;border-top:1px dotted #9a9a9a"></div>
<svg style="left:25px;top:368px" width="10" height="10" viewBox="0 0 10 10"><rect x="0.5" y="0.5" width="9" height="9" fill="#fff" stroke="#9a9a9a"/><path d="M2.5,5 H7.5" stroke="#444"/></svg>
<svg style="left:40px;top:365px" width="18" height="15" viewBox="0 0 18 15"><path d="M1,13.5 V1.5 H6.5 L8,3.5 H14 V6" fill="#cfe6f8" stroke="#2f86c8" stroke-width="1.2" stroke-linejoin="round"/><path d="M1,13.5 L4.5,6 H17 L13.5,13.5Z" fill="#7ebdeb" stroke="#2f86c8" stroke-width="1.2" stroke-linejoin="round"/></svg>
<div class="t" style="left:66px;top:366px;color:#1a1a1a">曲面精加工</div>
<div class="a" style="left:30px;top:413px;width:10px;height:0;border-top:1px dotted #9a9a9a"></div>
<svg style="left:40px;top:405px" width="18" height="15" viewBox="0 0 18 15"><path d="M1,13.5 V1.5 H6.5 L8,3.5 H14 V6" fill="#cfe6f8" stroke="#2f86c8" stroke-width="1.2" stroke-linejoin="round"/><path d="M1,13.5 L4.5,6 H17 L13.5,13.5Z" fill="#7ebdeb" stroke="#2f86c8" stroke-width="1.2" stroke-linejoin="round"/></svg>
<div class="t" style="left:66px;top:406px;color:#1a1a1a">参考线精加工</div>
<div class="a" style="left:49px;top:73px;width:9px;height:0;border-top:1px dotted #9a9a9a"></div>
<svg style="left:44px;top:68px" width="10" height="10" viewBox="0 0 10 10"><rect x="0.5" y="0.5" width="9" height="9" fill="#fff" stroke="#9a9a9a"/><path d="M2.5,5 H7.5" stroke="#444"/><path d="M5,2.5 V7.5" stroke="#444"/></svg>
<svg style="left:59px;top:64px" width="16" height="16" viewBox="0 0 16 16"><circle cx="8" cy="8" r="7.2" fill="#f2f2f2" stroke="#8a8a8a" stroke-width="1"/><path d="M4,8.5 L7,11.5 L12,3.5" fill="none" stroke="#333" stroke-width="1.6"/></svg>
<svg style="left:79px;top:70px" width="9" height="13" viewBox="0 0 9 13"><circle cx="4.5" cy="4.5" r="4.2" fill="#8e8e8e"/><rect x="2.5" y="8" width="4" height="3" fill="#8e8e8e"/><rect x="3" y="11" width="3" height="1.6" fill="#555"/></svg>
<svg style="left:92px;top:65px" width="17" height="17" viewBox="0 0 17 17"><rect x="0" y="0" width="17" height="17" fill="#159cc4"/><path d="M2.5,4.5 H14.5 V8.5 H2.5 V12.5 H14.5" fill="none" stroke="#7fe7f2" stroke-width="1.2"/><path d="M2.5,4.5 V12.5 M14.5,4.5 V12.5" stroke="#7fe7f2" stroke-width="1"/></svg>
<div class="t" style="left:113px;top:66px;color:#1a1a1a">11-平行精加工(基本设置)</div>
<div class="a" style="left:49px;top:93px;width:9px;height:0;border-top:1px dotted #9a9a9a"></div>
<svg style="left:44px;top:88px" width="10" height="10" viewBox="0 0 10 10"><rect x="0.5" y="0.5" width="9" height="9" fill="#fff" stroke="#9a9a9a"/><path d="M2.5,5 H7.5" stroke="#444"/><path d="M5,2.5 V7.5" stroke="#444"/></svg>
<svg style="left:59px;top:84px" width="16" height="16" viewBox="0 0 16 16"><circle cx="8" cy="8" r="7.2" fill="#f2f2f2" stroke="#8a8a8a" stroke-width="1"/><path d="M4,8.5 L7,11.5 L12,3.5" fill="none" stroke="#333" stroke-width="1.6"/></svg>
<svg style="left:79px;top:90px" width="9" height="13" viewBox="0 0 9 13"><circle cx="4.5" cy="4.5" r="4.2" fill="#8e8e8e"/><rect x="2.5" y="8" width="4" height="3" fill="#8e8e8e"/><rect x="3" y="11" width="3" height="1.6" fill="#555"/></svg>
<svg style="left:92px;top:85px" width="17" height="17" viewBox="0 0 17 17"><rect x="0" y="0" width="17" height="17" fill="#159cc4"/><path d="M2.5,4.5 H14.5 V8.5 H2.5 V12.5 H14.5" fill="none" stroke="#7fe7f2" stroke-width="1.2"/><path d="M2.5,4.5 V12.5 M14.5,4.5 V12.5" stroke="#7fe7f2" stroke-width="1"/></svg>
<div class="t" style="left:113px;top:86px;color:#1a1a1a">11-平行精加工（角度与垂直路径</div>
<div class="a" style="left:49px;top:113px;width:9px;height:0;border-top:1px dotted #9a9a9a"></div>
<svg style="left:44px;top:108px" width="10" height="10" viewBox="0 0 10 10"><rect x="0.5" y="0.5" width="9" height="9" fill="#fff" stroke="#9a9a9a"/><path d="M2.5,5 H7.5" stroke="#444"/><path d="M5,2.5 V7.5" stroke="#444"/></svg>
<svg style="left:59px;top:104px" width="16" height="16" viewBox="0 0 16 16"><circle cx="8" cy="8" r="7.2" fill="#f2f2f2" stroke="#8a8a8a" stroke-width="1"/><path d="M4,8.5 L7,11.5 L12,3.5" fill="none" stroke="#333" stroke-width="1.6"/></svg>
<svg style="left:79px;top:110px" width="9" height="13" viewBox="0 0 9 13"><circle cx="4.5" cy="4.5" r="4.2" fill="#8e8e8e"/><rect x="2.5" y="8" width="4" height="3" fill="#8e8e8e"/><rect x="3" y="11" width="3" height="1.6" fill="#555"/></svg>
<svg style="left:92px;top:105px" width="17" height="17" viewBox="0 0 17 17"><rect x="0" y="0" width="17" height="17" fill="#159cc4"/><path d="M2.5,4.5 H14.5 V8.5 H2.5 V12.5 H14.5" fill="none" stroke="#7fe7f2" stroke-width="1.2"/><path d="M2.5,4.5 V12.5 M14.5,4.5 V12.5" stroke="#7fe7f2" stroke-width="1"/></svg>
<div class="t" style="left:113px;top:106px;color:#1a1a1a">11-平行精加工（优化平行路径）</div>
<div class="a" style="left:49px;top:133px;width:9px;height:0;border-top:1px dotted #9a9a9a"></div>
<svg style="left:44px;top:128px" width="10" height="10" viewBox="0 0 10 10"><rect x="0.5" y="0.5" width="9" height="9" fill="#fff" stroke="#9a9a9a"/><path d="M2.5,5 H7.5" stroke="#444"/><path d="M5,2.5 V7.5" stroke="#444"/></svg>
<svg style="left:59px;top:124px" width="16" height="16" viewBox="0 0 16 16"><circle cx="8" cy="8" r="7.2" fill="#f2f2f2" stroke="#8a8a8a" stroke-width="1"/><path d="M4,8.5 L7,11.5 L12,3.5" fill="none" stroke="#333" stroke-width="1.6"/></svg>
<svg style="left:79px;top:130px" width="9" height="13" viewBox="0 0 9 13"><circle cx="4.5" cy="4.5" r="4.2" fill="#8e8e8e"/><rect x="2.5" y="8" width="4" height="3" fill="#8e8e8e"/><rect x="3" y="11" width="3" height="1.6" fill="#555"/></svg>
<svg style="left:92px;top:125px" width="17" height="17" viewBox="0 0 17 17"><rect x="0" y="0" width="17" height="17" fill="#159cc4"/><path d="M2.5,4.5 H14.5 V8.5 H2.5 V12.5 H14.5" fill="none" stroke="#7fe7f2" stroke-width="1.2"/><path d="M2.5,4.5 V12.5 M14.5,4.5 V12.5" stroke="#7fe7f2" stroke-width="1"/></svg>
<div class="t" style="left:113px;top:126px;color:#1a1a1a">11-平行精加工（垂直路径使用技巧）</div>
<div class="a" style="left:49px;top:333px;width:9px;height:0;border-top:1px dotted #9a9a9a"></div>
<svg style="left:44px;top:328px" width="10" height="10" viewBox="0 0 10 10"><rect x="0.5" y="0.5" width="9" height="9" fill="#fff" stroke="#9a9a9a"/><path d="M2.5,5 H7.5" stroke="#444"/><path d="M5,2.5 V7.5" stroke="#444"/></svg>
<svg style="left:59px;top:324px" width="16" height="16" viewBox="0 0 16 16"><circle cx="8" cy="8" r="7.2" fill="#f2f2f2" stroke="#8a8a8a" stroke-width="1"/><path d="M4,8.5 L7,11.5 L12,3.5" fill="none" stroke="#333" stroke-width="1.6"/></svg>
<svg style="left:79px;top:330px" width="9" height="13" viewBox="0 0 9 13"><circle cx="4.5" cy="4.5" r="4.2" fill="#8e8e8e"/><rect x="2.5" y="8" width="4" height="3" fill="#8e8e8e"/><rect x="3" y="11" width="3" height="1.6" fill="#555"/></svg>
<svg style="left:92px;top:325px" width="17" height="17" viewBox="0 0 17 17"><path d="M1,15 Q1,5 6,2 L9,3 L11,15 Q6,17 1,15Z" fill="#4a9fe0"/><path d="M9,1 L13,0 L16,13 L12,14.5Z" fill="#d9b92c" stroke="#8a7512" stroke-width=".6"/><path d="M11,1 L14,13" stroke="#8a7512" stroke-width=".7"/></svg>
<div class="t" style="left:113px;top:326px;color:#1a1a1a">20-SWARF精加工（基本设置）</div>
<div class="a" style="left:49px;top:353px;width:9px;height:0;border-top:1px dotted #9a9a9a"></div>
<svg style="left:44px;top:348px" width="10" height="10" viewBox="0 0 10 10"><rect x="0.5" y="0.5" width="9" height="9" fill="#fff" stroke="#9a9a9a"/><path d="M2.5,5 H7.5" stroke="#444"/><path d="M5,2.5 V7.5" stroke="#444"/></svg>
<svg style="left:59px;top:344px" width="16" height="16" viewBox="0 0 16 16"><circle cx="8" cy="8" r="7.2" fill="#f2f2f2" stroke="#8a8a8a" stroke-width="1"/><path d="M4,8.5 L7,11.5 L12,3.5" fill="none" stroke="#333" stroke-width="1.6"/></svg>
<svg style="left:79px;top:350px" width="9" height="13" viewBox="0 0 9 13"><circle cx="4.5" cy="4.5" r="4.2" fill="#8e8e8e"/><rect x="2.5" y="8" width="4" height="3" fill="#8e8e8e"/><rect x="3" y="11" width="3" height="1.6" fill="#555"/></svg>
<svg style="left:92px;top:345px" width="17" height="17" viewBox="0 0 17 17"><path d="M1,15 Q1,5 6,2 L9,3 L11,15 Q6,17 1,15Z" fill="#4a9fe0"/><path d="M9,1 L13,0 L16,13 L12,14.5Z" fill="#d9b92c" stroke="#8a7512" stroke-width=".6"/><path d="M11,1 L14,13" stroke="#8a7512" stroke-width=".7"/></svg>
<div class="t" style="left:113px;top:346px;color:#1a1a1a">20-SWARF精加工（详细讲解+总结）</div>
<div class="a" style="left:49px;top:393px;width:9px;height:0;border-top:1px dotted #9a9a9a"></div>
<svg style="left:44px;top:388px" width="10" height="10" viewBox="0 0 10 10"><rect x="0.5" y="0.5" width="9" height="9" fill="#fff" stroke="#9a9a9a"/><path d="M2.5,5 H7.5" stroke="#444"/><path d="M5,2.5 V7.5" stroke="#444"/></svg>
<svg style="left:59px;top:384px" width="16" height="16" viewBox="0 0 16 16"><circle cx="8" cy="8" r="7.2" fill="#f2f2f2" stroke="#8a8a8a" stroke-width="1"/><path d="M4,8.5 L7,11.5 L12,3.5" fill="none" stroke="#333" stroke-width="1.6"/></svg>
<svg style="left:79px;top:390px" width="9" height="13" viewBox="0 0 9 13"><circle cx="4.5" cy="4.5" r="4.2" fill="#8e8e8e"/><rect x="2.5" y="8" width="4" height="3" fill="#8e8e8e"/><rect x="3" y="11" width="3" height="1.6" fill="#555"/></svg>
<svg style="left:92px;top:385px" width="17" height="17" viewBox="0 0 17 17"><path d="M0.5,7 Q6,5 11,3 L13,13 Q8,15 4,16.5Z" fill="#3f8fe0"/><path d="M11,0.5 H15 V9 Q13,11 11,9Z" fill="#d9b92c" stroke="#8a7512" stroke-width=".6"/><path d="M13,1 V9" stroke="#8a7512" stroke-width=".7"/></svg>
<div class="a" style="left:111px;top:383px;width:64px;height:20px;background:#ececec"></div>
<div class="t" style="left:113px;top:386px;color:#1a1a1a">曲面精加工</div>
<div class="a" style="left:30px;top:433px;width:10px;height:0;border-top:1px dotted #9a9a9a"></div>
<svg style="left:25px;top:428px" width="10" height="10" viewBox="0 0 10 10"><rect x="0.5" y="0.5" width="9" height="9" fill="#fff" stroke="#9a9a9a"/><path d="M2.5,5 H7.5" stroke="#444"/><path d="M5,2.5 V7.5" stroke="#444"/></svg>
<svg style="left:40px;top:424px" width="16" height="16" viewBox="0 0 16 16"><circle cx="8" cy="8" r="7.2" fill="#f2f2f2" stroke="#8a8a8a" stroke-width="1"/><path d="M4,8.5 L7,11.5 L12,3.5" fill="none" stroke="#333" stroke-width="1.6"/></svg>
<svg style="left:58px;top:425px" width="15" height="17" viewBox="0 0 15 17"><rect x="0.5" y="0.5" width="12" height="15" fill="#dfe4e8" stroke="#7d8791"/><g fill="#2f8fe0"><rect x="2" y="5" width="2.5" height="2.5"/><rect x="5.5" y="5" width="2.5" height="2.5"/><rect x="9" y="5" width="2.5" height="2.5"/><rect x="2" y="9" width="2.5" height="2.5"/><rect x="5.5" y="9" width="2.5" height="2.5"/><rect x="2" y="13" width="2.5" height="2"/></g><circle cx="11" cy="13" r="3.5" fill="#2f8fe0"/><circle cx="11" cy="13" r="1.4" fill="#fff"/></svg>
<svg style="left:73px;top:425px" width="17" height="17" viewBox="0 0 17 17"><rect width="17" height="17" fill="#14a9c9"/><path d="M2,2 Q8.5,8.5 15,2 Q8.5,8.5 15,15 Q8.5,8.5 2,15 Q8.5,8.5 2,2Z" fill="none" stroke="#1fe0b0" stroke-width="1.2"/></svg>
<div class="t" style="left:95px;top:426px;font-weight:bold;color:#1a1a1a">&gt; 1</div>
<div class="a" style="left:11px;top:453px;width:11px;height:0;border-top:1px dotted #9a9a9a"></div>
<svg style="left:6px;top:448px" width="10" height="10" viewBox="0 0 10 10"><rect x="0.5" y="0.5" width="9" height="9" fill="#fff" stroke="#9a9a9a"/><path d="M2.5,5 H7.5" stroke="#444"/></svg>
<svg style="left:21px;top:444px" width="17" height="18" viewBox="0 0 17 18"><path d="M1,1 H16 V5 H1Z" fill="#9a9a9a"/><path d="M2,5 H5 V11 L3.5,13 L2,11Z M7,5 H11 V14 L9,17 L7,14Z M13,5 H16 V10 L14.5,12 L13,10Z" fill="#7a7a7a"/><path d="M0.5,0.5 H5" stroke="#bbb"/></svg>
<div class="t" style="left:43px;top:446px;font-weight:bold;color:#1a1a1a">刀具</div>
<div class="a" style="left:30px;top:473px;width:10px;height:0;border-top:1px dotted #9a9a9a"></div>
<svg style="left:25px;top:468px" width="10" height="10" viewBox="0 0 10 10"><rect x="0.5" y="0.5" width="9" height="9" fill="#fff" stroke="#9a9a9a"/><path d="M2.5,5 H7.5" stroke="#444"/><path d="M5,2.5 V7.5" stroke="#444"/></svg>
<svg style="left:40px;top:465px" width="18" height="15" viewBox="0 0 18 15"><path d="M1,13.5 V1.5 H6.5 L8,3.5 H14 V6" fill="#cfe6f8" stroke="#2f86c8" stroke-width="1.2" stroke-linejoin="round"/><path d="M1,13.5 L4.5,6 H17 L13.5,13.5Z" fill="#7ebdeb" stroke="#2f86c8" stroke-width="1.2" stroke-linejoin="round"/></svg>
<div class="t" style="left:66px;top:466px;color:#1a1a1a">A</div>
<div class="a" style="left:30px;top:493px;width:10px;height:0;border-top:1px dotted #9a9a9a"></div>
<svg style="left:25px;top:488px" width="10" height="10" viewBox="0 0 10 10"><rect x="0.5" y="0.5" width="9" height="9" fill="#fff" stroke="#9a9a9a"/><path d="M2.5,5 H7.5" stroke="#444"/><path d="M5,2.5 V7.5" stroke="#444"/></svg>
<svg style="left:40px;top:485px" width="18" height="15" viewBox="0 0 18 15"><path d="M1,13.5 V1.5 H6.5 L8,3.5 H14 V6" fill="#cfe6f8" stroke="#2f86c8" stroke-width="1.2" stroke-linejoin="round"/><path d="M1,13.5 L4.5,6 H17 L13.5,13.5Z" fill="#7ebdeb" stroke="#2f86c8" stroke-width="1.2" stroke-linejoin="round"/></svg>
<div class="t" style="left:66px;top:486px;color:#1a1a1a">圆鼻刀</div>
<div class="a" style="left:30px;top:513px;width:10px;height:0;border-top:1px dotted #9a9a9a"></div>
<svg style="left:25px;top:508px" width="10" height="10" viewBox="0 0 10 10"><rect x="0.5" y="0.5" width="9" height="9" fill="#fff" stroke="#9a9a9a"/><path d="M2.5,5 H7.5" stroke="#444"/><path d="M5,2.5 V7.5" stroke="#444"/></svg>
<svg style="left:40px;top:505px" width="18" height="15" viewBox="0 0 18 15"><path d="M1,13.5 V1.5 H6.5 L8,3.5 H14 V6" fill="#cfe6f8" stroke="#2f86c8" stroke-width="1.2" stroke-linejoin="round"/><path d="M1,13.5 L4.5,6 H17 L13.5,13.5Z" fill="#7ebdeb" stroke="#2f86c8" stroke-width="1.2" stroke-linejoin="round"/></svg>
<div class="t" style="left:66px;top:506px;color:#1a1a1a">平底刀</div>
<div class="a" style="left:30px;top:533px;width:10px;height:0;border-top:1px dotted #9a9a9a"></div>
<svg style="left:25px;top:528px" width="10" height="10" viewBox="0 0 10 10"><rect x="0.5" y="0.5" width="9" height="9" fill="#fff" stroke="#9a9a9a"/><path d="M2.5,5 H7.5" stroke="#444"/><path d="M5,2.5 V7.5" stroke="#444"/></svg>
<svg style="left:40px;top:525px" width="18" height="15" viewBox="0 0 18 15"><path d="M1,13.5 V1.5 H6.5 L8,3.5 H14 V6" fill="#cfe6f8" stroke="#2f86c8" stroke-width="1.2" stroke-linejoin="round"/><path d="M1,13.5 L4.5,6 H17 L13.5,13.5Z" fill="#7ebdeb" stroke="#2f86c8" stroke-width="1.2" stroke-linejoin="round"/></svg>
<div class="t" style="left:66px;top:526px;color:#1a1a1a">球刀</div>
<div class="a" style="left:30px;top:553px;width:10px;height:0;border-top:1px dotted #9a9a9a"></div>
<svg style="left:25px;top:548px" width="10" height="10" viewBox="0 0 10 10"><rect x="0.5" y="0.5" width="9" height="9" fill="#fff" stroke="#9a9a9a"/><path d="M2.5,5 H7.5" stroke="#444"/><path d="M5,2.5 V7.5" stroke="#444"/></svg>
<svg style="left:40px;top:545px" width="18" height="15" viewBox="0 0 18 15"><path d="M1,13.5 V1.5 H6.5 L8,3.5 H14 V6" fill="#cfe6f8" stroke="#2f86c8" stroke-width="1.2" stroke-linejoin="round"/><path d="M1,13.5 L4.5,6 H17 L13.5,13.5Z" fill="#7ebdeb" stroke="#2f86c8" stroke-width="1.2" stroke-linejoin="round"/></svg>
<div class="t" style="left:66px;top:546px;color:#1a1a1a">锥度球刀</div>
<div class="a" style="left:30px;top:573px;width:10px;height:0;border-top:1px dotted #9a9a9a"></div>
<svg style="left:25px;top:568px" width="10" height="10" viewBox="0 0 10 10"><rect x="0.5" y="0.5" width="9" height="9" fill="#fff" stroke="#9a9a9a"/><path d="M2.5,5 H7.5" stroke="#444"/><path d="M5,2.5 V7.5" stroke="#444"/></svg>
<svg style="left:40px;top:565px" width="18" height="15" viewBox="0 0 18 15"><path d="M1,13.5 V1.5 H6.5 L8,3.5 H14 V6" fill="#cfe6f8" stroke="#2f86c8" stroke-width="1.2" stroke-linejoin="round"/><path d="M1,13.5 L4.5,6 H17 L13.5,13.5Z" fill="#7ebdeb" stroke="#2f86c8" stroke-width="1.2" stroke-linejoin="round"/></svg>
<div class="t" style="left:66px;top:566px;color:#1a1a1a">钻头</div>
<div class="a" style="left:11px;top:593px;width:11px;height:0;border-top:1px dotted #9a9a9a"></div>
<svg style="left:6px;top:588px" width="10" height="10" viewBox="0 0 10 10"><rect x="0.5" y="0.5" width="9" height="9" fill="#fff" stroke="#9a9a9a"/><path d="M2.5,5 H7.5" stroke="#444"/><path d="M5,2.5 V7.5" stroke="#444"/></svg>
<svg style="left:21px;top:586px" width="18" height="14" viewBox="0 0 18 14"><path d="M5,12.5 Q0.8,12.5 0.8,8.5 Q0.8,5 4,4.5 Q5,1 9,1 Q13,1 14,4.5 Q17.2,5 17.2,8.5 Q17.2,12.5 13,12.5Z" fill="#fff" stroke="#2f86c8" stroke-width="1.3"/></svg>
<div class="t" style="left:43px;top:586px;color:#1a1a1a">边界</div>
<div class="a" style="left:11px;top:613px;width:11px;height:0;border-top:1px dotted #9a9a9a"></div>
<svg style="left:6px;top:608px" width="10" height="10" viewBox="0 0 10 10"><rect x="0.5" y="0.5" width="9" height="9" fill="#fff" stroke="#9a9a9a"/><path d="M2.5,5 H7.5" stroke="#444"/></svg>
<svg style="left:21px;top:605px" width="17" height="17" viewBox="0 0 17 17"><path d="M1.5,1.5 Q8.5,8.5 15.5,1.5 Q8.5,8.5 15.5,15.5 Q8.5,8.5 1.5,15.5 Q8.5,8.5 1.5,1.5Z" fill="#e4f1fb" stroke="#3f97d8" stroke-width="1.05" stroke-linejoin="round"/></svg>
<div class="t" style="left:43px;top:606px;color:#1a1a1a">参考线</div>
<div class="a" style="left:30px;top:633px;width:12px;height:0;border-top:1px dotted #9a9a9a"></div>
<svg style="left:60px;top:630px" width="9" height="13" viewBox="0 0 9 13"><circle cx="4.5" cy="4.5" r="4.2" fill="#8e8e8e"/><rect x="2.5" y="8" width="4" height="3" fill="#8e8e8e"/><rect x="3" y="11" width="3" height="1.6" fill="#555"/></svg>
<svg style="left:73px;top:625px" width="17" height="17" viewBox="0 0 17 17"><rect x="0" y="0" width="17" height="17" fill="#cfe0f0"/><path d="M1.5,1.5 Q8.5,8.5 15.5,1.5 Q8.5,8.5 15.5,15.5 Q8.5,8.5 1.5,15.5 Q8.5,8.5 1.5,1.5Z" fill="#e4f1fb" stroke="#3f97d8" stroke-width="1.05" stroke-linejoin="round"/></svg>
<div class="t" style="left:94px;top:626px;color:#1a1a1a">1</div>
<div class="a" style="left:30px;top:653px;width:12px;height:0;border-top:1px dotted #9a9a9a"></div>
<svg style="left:60px;top:650px" width="9" height="13" viewBox="0 0 9 13"><circle cx="4.5" cy="4.5" r="4.2" fill="#8e8e8e"/><rect x="2.5" y="8" width="4" height="3" fill="#8e8e8e"/><rect x="3" y="11" width="3" height="1.6" fill="#555"/></svg>
<svg style="left:73px;top:645px" width="17" height="17" viewBox="0 0 17 17"><path d="M1.5,1.5 Q8.5,8.5 15.5,1.5 Q8.5,8.5 15.5,15.5 Q8.5,8.5 1.5,15.5 Q8.5,8.5 1.5,1.5Z" fill="#e4f1fb" stroke="#3f97d8" stroke-width="1.05" stroke-linejoin="round"/></svg>
<div class="t" style="left:94px;top:646px;color:#1a1a1a">2</div>
<div class="a" style="left:30px;top:673px;width:12px;height:0;border-top:1px dotted #9a9a9a"></div>
<svg style="left:60px;top:670px" width="9" height="13" viewBox="0 0 9 13"><circle cx="4.5" cy="4.5" r="4.2" fill="#8e8e8e"/><rect x="2.5" y="8" width="4" height="3" fill="#8e8e8e"/><rect x="3" y="11" width="3" height="1.6" fill="#555"/></svg>
<svg style="left:73px;top:665px" width="17" height="17" viewBox="0 0 17 17"><rect x="0" y="0" width="17" height="17" fill="#cfe0f0"/><path d="M1.5,1.5 Q8.5,8.5 15.5,1.5 Q8.5,8.5 15.5,15.5 Q8.5,8.5 1.5,15.5 Q8.5,8.5 1.5,1.5Z" fill="#e4f1fb" stroke="#3f97d8" stroke-width="1.05" stroke-linejoin="round"/></svg>
<div class="t" style="left:94px;top:666px;color:#1a1a1a">3</div>
<div class="a" style="left:30px;top:693px;width:12px;height:0;border-top:1px dotted #9a9a9a"></div>
<svg style="left:60px;top:690px" width="9" height="13" viewBox="0 0 9 13"><circle cx="4.5" cy="4.5" r="4.2" fill="#8e8e8e"/><rect x="2.5" y="8" width="4" height="3" fill="#8e8e8e"/><rect x="3" y="11" width="3" height="1.6" fill="#555"/></svg>
<svg style="left:73px;top:685px" width="17" height="17" viewBox="0 0 17 17"><path d="M1.5,1.5 Q8.5,8.5 15.5,1.5 Q8.5,8.5 15.5,15.5 Q8.5,8.5 1.5,15.5 Q8.5,8.5 1.5,1.5Z" fill="#e4f1fb" stroke="#3f97d8" stroke-width="1.05" stroke-linejoin="round"/></svg>
<div class="t" style="left:94px;top:686px;color:#1a1a1a">4</div>
<div class="a" style="left:30px;top:713px;width:12px;height:0;border-top:1px dotted #9a9a9a"></div>
<svg style="left:60px;top:710px" width="9" height="13" viewBox="0 0 9 13"><circle cx="4.5" cy="4.5" r="4.2" fill="#8e8e8e"/><rect x="2.5" y="8" width="4" height="3" fill="#8e8e8e"/><rect x="3" y="11" width="3" height="1.6" fill="#555"/></svg>
<svg style="left:73px;top:705px" width="17" height="17" viewBox="0 0 17 17"><path d="M1.5,1.5 Q8.5,8.5 15.5,1.5 Q8.5,8.5 15.5,15.5 Q8.5,8.5 1.5,15.5 Q8.5,8.5 1.5,1.5Z" fill="#e4f1fb" stroke="#3f97d8" stroke-width="1.05" stroke-linejoin="round"/></svg>
<div class="t" style="left:94px;top:706px;color:#1a1a1a">5</div>
<div class="a" style="left:30px;top:733px;width:12px;height:0;border-top:1px dotted #9a9a9a"></div>
<svg style="left:60px;top:730px" width="9" height="13" viewBox="0 0 9 13"><circle cx="4.5" cy="4.5" r="4.2" fill="#8e8e8e"/><rect x="2.5" y="8" width="4" height="3" fill="#8e8e8e"/><rect x="3" y="11" width="3" height="1.6" fill="#555"/></svg>
<svg style="left:73px;top:725px" width="17" height="17" viewBox="0 0 17 17"><path d="M1.5,1.5 Q8.5,8.5 15.5,1.5 Q8.5,8.5 15.5,15.5 Q8.5,8.5 1.5,15.5 Q8.5,8.5 1.5,1.5Z" fill="#e4f1fb" stroke="#3f97d8" stroke-width="1.05" stroke-linejoin="round"/></svg>
<div class="t" style="left:94px;top:726px;color:#1a1a1a">6</div>
<div class="a" style="left:30px;top:753px;width:12px;height:0;border-top:1px dotted #9a9a9a"></div>
<svg style="left:60px;top:750px" width="9" height="13" viewBox="0 0 9 13"><circle cx="4.5" cy="4.5" r="4.2" fill="#8e8e8e"/><rect x="2.5" y="8" width="4" height="3" fill="#8e8e8e"/><rect x="3" y="11" width="3" height="1.6" fill="#555"/></svg>
<svg style="left:73px;top:745px" width="17" height="17" viewBox="0 0 17 17"><path d="M1.5,1.5 Q8.5,8.5 15.5,1.5 Q8.5,8.5 15.5,15.5 Q8.5,8.5 1.5,15.5 Q8.5,8.5 1.5,1.5Z" fill="#e4f1fb" stroke="#3f97d8" stroke-width="1.05" stroke-linejoin="round"/></svg>
<div class="t" style="left:94px;top:746px;color:#1a1a1a">7</div>
<div class="a" style="left:30px;top:773px;width:12px;height:0;border-top:1px dotted #9a9a9a"></div>
<svg style="left:60px;top:770px" width="9" height="13" viewBox="0 0 9 13"><circle cx="4.5" cy="4.5" r="4.2" fill="#8e8e8e"/><rect x="2.5" y="8" width="4" height="3" fill="#8e8e8e"/><rect x="3" y="11" width="3" height="1.6" fill="#555"/></svg>
<svg style="left:73px;top:765px" width="17" height="17" viewBox="0 0 17 17"><path d="M1.5,1.5 Q8.5,8.5 15.5,1.5 Q8.5,8.5 15.5,15.5 Q8.5,8.5 1.5,15.5 Q8.5,8.5 1.5,1.5Z" fill="#e4f1fb" stroke="#3f97d8" stroke-width="1.05" stroke-linejoin="round"/></svg>
<div class="t" style="left:94px;top:766px;color:#1a1a1a">8</div>
<div class="a" style="left:357px;top:0;width:19px;height:776px;background:#f0f0f0"></div>
<svg style="left:360px;top:762px" width="9" height="7" viewBox="0 0 10 7"><path d="M1,1.5 L4.5,5 L8,1.5" fill="none" stroke="#555" stroke-width="2"/></svg>
</div>
<div id="viewport" class="a">
<svg style="left:0;top:0" width="1487" height="849" viewBox="379 158 1487 849">
<defs>
<linearGradient id="gM" x1="0" y1="373" x2="0" y2="850" gradientUnits="userSpaceOnUse"><stop offset="0" stop-color="#5bcce4"/><stop offset=".45" stop-color="#57c4dc"/><stop offset="1" stop-color="#4fb2cc"/></linearGradient>
<linearGradient id="gRibV" x1="0" y1="0" x2="1" y2="0"><stop offset="0" stop-color="#43b9d6"/><stop offset=".35" stop-color="#2b9cba"/><stop offset="1" stop-color="#2a97b5"/></linearGradient>
<linearGradient id="gTube" x1="0" y1="0" x2="0" y2="1"><stop offset="0" stop-color="#1f7f9c"/><stop offset=".45" stop-color="#3fb6d3"/><stop offset="1" stop-color="#2a98b6"/></linearGradient>
<linearGradient id="gStem" x1="0" y1="0" x2="1" y2="0"><stop offset="0" stop-color="#2590ae"/><stop offset=".5" stop-color="#45bcd8"/><stop offset="1" stop-color="#2a98b6"/></linearGradient>
<linearGradient id="gDiagT" x1="1400" y1="330" x2="1440" y2="362" gradientUnits="userSpaceOnUse"><stop offset="0" stop-color="#3db4d2"/><stop offset=".45" stop-color="#2692b1"/><stop offset=".75" stop-color="#55c9e0"/><stop offset="1" stop-color="#2f9fbd"/></linearGradient>
<linearGradient id="gDiagB" x1="1400" y1="832" x2="1440" y2="800" gradientUnits="userSpaceOnUse"><stop offset="0" stop-color="#2b98b6"/><stop offset=".5" stop-color="#49bfda"/><stop offset=".8" stop-color="#1f7893"/><stop offset="1" stop-color="#2a8eab"/></linearGradient>
<radialGradient id="gRing" cx="1150" cy="582" r="95" gradientUnits="userSpaceOnUse"><stop offset="0" stop-color="#8ff6fb"/><stop offset=".5" stop-color="#74e2f0"/><stop offset="1" stop-color="#2a98b6"/></radialGradient>
<linearGradient id="gRingO" x1="1056" y1="0" x2="1170" y2="0" gradientUnits="userSpaceOnUse"><stop offset="0" stop-color="#2b9ab8"/><stop offset=".5" stop-color="#55c8e0"/><stop offset="1" stop-color="#7be6f3"/></linearGradient>
<linearGradient id="gFil" x1="1452" y1="0" x2="1480" y2="0" gradientUnits="userSpaceOnUse"><stop offset="0" stop-color="#2c9bb9"/><stop offset=".6" stop-color="#2a94b2"/><stop offset=".62" stop-color="#3aaecb"/><stop offset="1" stop-color="#47bedb"/></linearGradient>
<linearGradient id="gBlade" x1="1527" y1="0" x2="1544" y2="0" gradientUnits="userSpaceOnUse"><stop offset="0" stop-color="#48bcd8"/><stop offset=".5" stop-color="#379fbe"/><stop offset="1" stop-color="#2f93b2"/></linearGradient>
<linearGradient id="gStrip" x1="1534" y1="0" x2="1544" y2="0" gradientUnits="userSpaceOnUse"><stop offset="0" stop-color="#2f9dba"/><stop offset=".5" stop-color="#52c6de"/><stop offset="1" stop-color="#86eef7"/></linearGradient>
<linearGradient id="gHF" x1="0" y1="316" x2="0" y2="332" gradientUnits="userSpaceOnUse"><stop offset="0" stop-color="#2a94b2"/><stop offset="1" stop-color="#4cc2dc"/></linearGradient>
<linearGradient id="gHFb" x1="0" y1="846" x2="0" y2="830" gradientUnits="userSpaceOnUse"><stop offset="0" stop-color="#2a94b2"/><stop offset="1" stop-color="#4cc2dc"/></linearGradient>
<radialGradient id="gEl" cx="1461" cy="331" r="26" gradientUnits="userSpaceOnUse"><stop offset=".35" stop-color="#2d9bb9"/><stop offset=".7" stop-color="#66d8ea"/><stop offset="1" stop-color="#2f9fbd"/></radialGradient>
<radialGradient id="gElb" cx="1461" cy="831" r="26" gradientUnits="userSpaceOnUse"><stop offset=".35" stop-color="#2d9bb9"/><stop offset=".7" stop-color="#55c8de"/><stop offset="1" stop-color="#2f9fbd"/></radialGradient><linearGradient id="gFil2" x1="1469" y1="690" x2="1515" y2="490" gradientUnits="userSpaceOnUse"><stop offset="0" stop-color="#58cae2"/><stop offset=".45" stop-color="#3aaccb"/><stop offset=".8" stop-color="#247a93"/><stop offset="1" stop-color="#1c6278"/></linearGradient><linearGradient id="gFil1" x1="1460" y1="480" x2="1500" y2="695" gradientUnits="userSpaceOnUse"><stop offset="0" stop-color="#2c93b0"/><stop offset=".6" stop-color="#2c94b1"/><stop offset=".85" stop-color="#48bdd8"/><stop offset="1" stop-color="#3aaccb"/></linearGradient></defs>
<rect x="990" y="196.5" width="605.5" height="770" fill="none" stroke="#1b2fd8" stroke-width="1.3"/>
<path d="M690,197 H1541 L1595,247 V916 L1542,965.5 H700 L679,944 Z" fill="#8ff6fb"/>
<rect x="690" y="197" width="757" height="6.5" fill="#36b9d9"/>
<path d="M1447,197 H1541 L1547,203 H1447Z" fill="#7fe9f5"/>
<path d="M1586,252 L1594,247 V916 L1586,910Z" fill="#38aac9"/>
<path d="M1541,197 L1595,247 L1586,252 L1536,204Z" fill="#7fe9f5"/>
<path d="M1542,965 L1595,916 L1586,910 L1536,957Z" fill="#3db5d3"/>
<rect x="1470" y="957" width="68" height="8" fill="#3db5d3"/>
<path d="M1594.5,248 V916" stroke="#f0ffff" stroke-width="1.6"/>
<path d="M1470,965 H1542 L1595,916" stroke="#e8ffff" stroke-width="1.6" fill="none"/>
<rect x="1534" y="203" width="10" height="130" fill="url(#gStrip)"/><rect x="1534" y="830" width="10" height="127" fill="url(#gStrip)"/>
<path d="M690,373 H1433 V382 L1453.3,355.2 Q1480,356 1486.4,331 H1519 Q1527,332 1527.5,337 L1529,400 L1530.5,440 L1531,463.5 L1525.5,461 H1520 L1515,472 H1509 A56,56 0 0 0 1453,528 V636 A56,56 0 0 0 1509,692 H1515 L1520,701 H1525.5 L1531,698.5 L1530.5,722 L1529,762 L1527.5,825 Q1527,830 1519,831 H1486.4 Q1480,806 1453.3,806.8 L1433,780 V774 H690Z" fill="url(#gM)"/>
<path d="M1527.5,337 L1543.5,332 L1543.5,380 Q1542,420 1537.5,440 Q1535,458 1531,463.5 Q1530.5,430 1529,400Z" fill="url(#gBlade)"/>
<path d="M1527.5,825 L1543.5,830 L1543.5,782 Q1542,742 1537.5,722 Q1535,704 1531,698.5 Q1530.5,732 1529,762Z" fill="url(#gBlade)"/>
<path d="M1515,472 L1520,461 H1525.5 V472Z" fill="#7fe6f2"/><path d="M1515,692 L1520,701 H1525.5 V692Z" fill="#7fe6f2"/>
<path d="M1425,391 Q1432,392 1433,400 V462 Q1432,491 1404,491.5 V495 Q1436.5,494 1436.5,462 V396 Q1436,391 1433,388 Z" fill="#2f9dba"/>
<path d="M1404,673 Q1432,675 1433,704 V774 H1436.5 V704 Q1436,670.5 1404,669.5Z" fill="#2f9dba"/>
<path d="M690,373 H1425 L1433,383 V391 H690Z" fill="#3ab4d2"/>
<path d="M690,673 H1404 Q1433,675 1433,704 V774 H690Z" fill="#50b4ce"/>
<path d="M690,774 H1433 L1428,789 H690Z" fill="#1a4a5b"/>
<rect x="690" y="788.5" width="703" height="4.5" fill="#3aa9c6"/>
<rect x="690" y="554" width="763" height="56.5" fill="#66d3e8"/>
<rect x="690" y="554" width="763" height="10" fill="#5fcde4"/>
<rect x="690" y="575" width="360" height="14" fill="url(#gTube)"/>
<path d="M1233,575 H1453 V589 H1233 Q1226,582 1233,575Z" fill="url(#gTube)"/>
<path d="M1189,572 H1212 Q1221,573 1221,582 Q1221,591 1212,592.5 H1189Z" fill="url(#gTube)"/>
<path d="M1509,472 H1586 V692 H1509 A56,56 0 0 1 1453,636 V528 A56,56 0 0 1 1509,472Z" fill="url(#gFil1)"/>
<path d="M1510,494 H1586 V674 H1510 A40,40 0 0 1 1469,632 V532 A40,40 0 0 1 1510,494Z" fill="url(#gFil2)"/>
<rect x="1509" y="472" width="77" height="18.5" fill="#277c94"/>
<rect x="1509" y="472" width="16.5" height="18.5" fill="#2d8ba6"/>
<rect x="1509" y="490.5" width="77" height="4.5" fill="#1c5f73"/>
<rect x="1509" y="495" width="77" height="7" fill="#2f9dba"/>
<rect x="1509" y="663" width="77" height="11.5" fill="#6bd6ea"/>
<rect x="1509" y="674.5" width="77" height="18" fill="#45bcd8"/>
<path d="M1510,502 H1586 V663 H1510 A30.5,31 0 0 1 1479.5,632 V532 A30.5,30 0 0 1 1510,502Z" fill="#8ff6fb"/>
<rect x="1447.2" y="197" width="18.6" height="120.5" fill="url(#gRibV)"/>
<rect x="1466" y="203" width="4.5" height="115" fill="#4fc4dd"/>
<rect x="1470.7" y="203" width="15.7" height="104" fill="#2c9ab8"/>
<rect x="1447.2" y="844.5" width="18.6" height="116.5" fill="url(#gRibV)"/>
<rect x="1466" y="845" width="4.5" height="113" fill="#4fc4dd"/>
<rect x="1470.7" y="855" width="15.7" height="102" fill="#2c9ab8"/>
<rect x="794" y="960.5" width="676" height="5.5" fill="#2f93b0"/>
<g><rect x="1470.7" y="306.8" width="15.7" height="24.2" fill="#36a9c6"/><path d="M1486.4,306.3 H1495 L1500.7,315.5 L1495,320.6 H1486.4Z" fill="#3fb3d0"/><path d="M1486.4,316.5 H1495 L1500.7,315.5 L1503,316.5 H1518.5 V331.3 H1486.4Z" fill="url(#gHF)"/><path d="M1518.5,316.5 Q1538,317 1543.5,332 L1527.5,337 Q1527,331.5 1518.5,331.3Z" fill="#399fbd"/><path d="M1447.2,317 H1470.2 V331 Q1470,345 1458.4,346 L1450.3,340 L1447.2,320.6Z" fill="#2d9bb9"/><path d="M1486.4,331 A27,26 0 0 1 1459,357 Q1455,357 1453.3,355.2 L1458.4,346 Q1470,345 1470.2,331Z" fill="url(#gEl)"/><path d="M1392.2,365 L1436.5,312.4 L1447.2,320.6 L1450.3,340 L1428,368.4 L1425,373 H1392.2Z" fill="url(#gDiagT)"/><path d="M1436.5,312.4 L1447.2,320.6 L1458,333 Q1452,341 1445,340 Q1436,334 1436.5,312.4Z" fill="#3cb4d1"/><path d="M1428,368.4 L1450.3,340 L1458.4,346 L1433,382 L1425,373Z" fill="#2b98b6"/><path d="M1430.5,375 L1454.5,343 L1458.4,346 L1433,382Z" fill="#41b9d5"/></g>
<g transform="translate(0,1162) scale(1,-1)"><rect x="1470.7" y="306.8" width="15.7" height="24.2" fill="#36a9c6"/><path d="M1486.4,306.3 H1495 L1500.7,315.5 L1495,320.6 H1486.4Z" fill="#3fb3d0"/><path d="M1486.4,316.5 H1495 L1500.7,315.5 L1503,316.5 H1518.5 V331.3 H1486.4Z" fill="url(#gHFb)"/><path d="M1518.5,316.5 Q1538,317 1543.5,332 L1527.5,337 Q1527,331.5 1518.5,331.3Z" fill="#399fbd"/><path d="M1447.2,317 H1470.2 V331 Q1470,345 1458.4,346 L1450.3,340 L1447.2,320.6Z" fill="#2d9bb9"/><path d="M1486.4,331 A27,26 0 0 1 1459,357 Q1455,357 1453.3,355.2 L1458.4,346 Q1470,345 1470.2,331Z" fill="url(#gElb)"/><path d="M1392.2,365 L1436.5,312.4 L1447.2,320.6 L1450.3,340 L1428,368.4 L1425,373 H1392.2Z" fill="url(#gDiagB)"/><path d="M1436.5,312.4 L1447.2,320.6 L1458,333 Q1452,341 1445,340 Q1436,334 1436.5,312.4Z" fill="#3cb4d1"/><path d="M1428,368.4 L1450.3,340 L1458.4,346 L1433,382 L1425,373Z" fill="#2b98b6"/><path d="M1430.5,375 L1454.5,343 L1458.4,346 L1433,382Z" fill="#41b9d5"/></g>
<path d="M1262.5,371.5 V273.5 A17.5,17.5 0 0 1 1280,256 H1343.5 A17.5,17.5 0 0 1 1361,273.5 V371.5Z" fill="#8ff6fb"/>
<rect x="1262.5" y="256" width="98.5" height="111" rx="17.5" ry="17.5" fill="#2b87a3"/>
<path d="M1280,256 H1343.5 A17.5,17.5 0 0 1 1361,273.5 V284 L1354.5,286 V277 Q1354,262 1339,261.6 H1284 Q1269,262 1268.8,277 V286 L1262.5,284 V273.5 A17.5,17.5 0 0 1 1280,256Z" fill="#1f6479"/>
<path d="M1287,256 H1336 L1332,261.6 H1291Z" fill="#1b5366"/>
<rect x="1268.8" y="261.6" width="85.7" height="105.3" rx="16" ry="16" fill="#3fa7c4"/>
<path d="M1289,366.5 H1334 L1337.5,371.5 H1285.5Z" fill="#2f9dba"/>
<rect x="1273" y="265.5" width="78" height="96.8" rx="15" ry="15" fill="#8ff6fb"/>
<rect x="1173" y="492" width="16" height="180" fill="url(#gStem)"/>
<ellipse cx="1113" cy="582" rx="57" ry="53" fill="url(#gRingO)"/>
<ellipse cx="1117" cy="582.5" rx="43.5" ry="41.5" fill="url(#gRing)"/>
<ellipse cx="1122" cy="582.5" rx="31" ry="33" fill="#86f0f8"/>
<ellipse cx="1122" cy="582.3" rx="18" ry="21" fill="#7ce6f3"/>
<rect x="1069" y="571.5" width="101" height="21" fill="url(#gTube)"/>
<g fill="none" stroke="#031c27" stroke-width="1.15" stroke-linecap="round" stroke-linejoin="round"><path d="M690,203.5 H1447" stroke-width="1.0"/><path d="M1447.2,197 V320.6 M1466,203 V317 M1470.5,203 V317 M1486.4,203 V306 M1471,203 H1536 M1534,203 V320 M1543.5,210 V332" stroke-width="1.0"/><path d="M1541,197 L1595,247 M1536,204 L1586,252 V910 L1536,957 H1470 M1543.5,830 V957 M1534,842 V957" stroke-width="1.0"/><path d="M1447.2,841.5 V961 M1466,845 V961 M1470.5,845 V961 M1486.4,856 V957" stroke-width="1.0"/><path d="M690,373 H1392.2" stroke-width="1.1"/><path d="M690,391 H1425 Q1432,392 1433,400 V462 Q1432,491 1404,491.5 H690" stroke-width="1.2"/><path d="M690,494.5 H1404 Q1436.5,494 1436.5,462 V396" stroke-width="0.9"/><path d="M1527.5,337 L1529,400 L1530.5,440 L1531,463.5 L1525.5,461 H1520 L1515,472 H1509 M1525.5,461 V472 M1543.5,332 V380 Q1542,420 1537.5,440 Q1535,458 1531,463.5" stroke-width="1.0"/><path d="M1509,472 A56,56 0 0 0 1453,528 V636 A56,56 0 0 0 1509,692 M1509,472 H1586 M1509,692 H1586 M1509,494 H1586 M1509,674.5 H1586" stroke-width="1.0"/><path d="M1510,494 A40,40 0 0 0 1469,532 V632 A40,40 0 0 0 1510,674" stroke-width="1.0"/><path d="M1510,502 H1586 M1510,663 H1586 M1510,502 A30.5,30 0 0 0 1479.5,532 V632 A30.5,31 0 0 0 1510,663" stroke-width="1.0"/><path d="M1527.5,825 L1529,762 L1530.5,722 L1531,698.5 L1525.5,701 H1520 L1515,692 H1509 M1525.5,701 V692 M1543.5,830 V782 Q1542,742 1537.5,722 Q1535,704 1531,698.5" stroke-width="1.0"/><path d="M690,673 H1404 Q1432,675 1433,704 V774 M690,774 H1433" stroke-width="1.2"/><path d="M690,670 H1404 Q1436.5,670.5 1436.5,704 V780" stroke-width="0.9"/><path d="M690,788.5 H1428 M690,793 H1392.2 M1433,774 L1428,789" stroke-width="1.0"/><path d="M690,554 H1453 M690,610.5 H1453" stroke-width="0.9"/><path d="M690,575 H1050 M690,589 H1050 M1050,575 Q1057,582 1050,589 M1233,575 H1453 M1233,589 H1453 M1233,575 Q1226,582 1233,589" stroke-width="0.9"/><path d="M1189,572 H1212 Q1221,573 1221,582 Q1221,591 1212,592.5 H1189 M1212,572 V592.5" stroke-width="0.9"/><path d="M1173,492 V672 M1189,492 V672 M1181,500 V572 M1181,593 V664 M1173,554 H1189 M1173,610.5 H1189" stroke-width="1.1"/><path d="M1173,507 Q1181,497 1189,507 M1173,656 Q1181,666 1189,656" stroke-width="0.8"/><path d="M1170,572 L1181,582 L1170,592.5 M1189,572 L1181,582 L1189,592.5" stroke-width="0.9"/><path d="M1262.5,793 V892 Q1262.5,908.5 1279,908.5 H1344 Q1360.5,908.5 1360.5,892 V793" stroke-width="0.9"/><path d="M794,960.5 H1470 M700,966 H1542" stroke-width="0.9"/><path d="M1392.2,373 V365 L1436.5,312.4 L1447.2,320.6 M1392.2,373 H1425 L1433,382 L1453.3,355.2 Q1455,357 1459,357 A27,26 0 0 0 1486.4,331 M1428,368.4 L1450.3,340 M1430.5,375 L1454.5,343 M1450.3,340 L1458.4,346 L1453.3,355.2 M1458.4,346 Q1470,345 1470.2,331 M1447.2,317 H1466 M1436.5,312.4 Q1436,334 1445,340 Q1452,341 1458,333 L1447.2,320.6 M1392.2,368 Q1415,366 1428,368.4 M1470.7,306.8 H1486.4 M1470.7,316.5 L1486.4,325 M1470.7,325 H1486.4 M1470.2,331 H1518.5 M1486.4,306.3 H1495 L1500.7,315.5 L1495,320.6 H1486.4 M1495,306.3 V320.6 M1486.4,306 V331 M1500.7,315.5 L1503,316.5 H1518.5 Q1538,317 1543.5,332 L1527.5,337 Q1527,331.5 1518.5,331.3 M1518.5,316.5 V331.3"/><path d="M1392.2,373 V365 L1436.5,312.4 L1447.2,320.6 M1392.2,373 H1425 L1433,382 L1453.3,355.2 Q1455,357 1459,357 A27,26 0 0 0 1486.4,331 M1428,368.4 L1450.3,340 M1430.5,375 L1454.5,343 M1450.3,340 L1458.4,346 L1453.3,355.2 M1458.4,346 Q1470,345 1470.2,331 M1447.2,317 H1466 M1436.5,312.4 Q1436,334 1445,340 Q1452,341 1458,333 L1447.2,320.6 M1392.2,368 Q1415,366 1428,368.4 M1470.7,306.8 H1486.4 M1470.7,316.5 L1486.4,325 M1470.7,325 H1486.4 M1470.2,331 H1518.5 M1486.4,306.3 H1495 L1500.7,315.5 L1495,320.6 H1486.4 M1495,306.3 V320.6 M1486.4,306 V331 M1500.7,315.5 L1503,316.5 H1518.5 Q1538,317 1543.5,332 L1527.5,337 Q1527,331.5 1518.5,331.3 M1518.5,316.5 V331.3" transform="translate(0,1162) scale(1,-1)"/><path d="M679,944 L700,965 M700,944 V965 M715.5,944 V965 M749,944 V965 M768,944 V965 M775.5,944 V965 M794,944 V965 M700,957 H794" stroke-width="1.0"/>
<path d="M1262.5,371.5 V273.5 A17.5,17.5 0 0 1 1280,256 H1343.5 A17.5,17.5 0 0 1 1361,273.5 V371.5"/>
<rect x="1262.5" y="256" width="98.5" height="111" rx="17.5" ry="17.5" stroke-width=".9"/>
<rect x="1268.8" y="261.6" width="85.7" height="105.3" rx="16" ry="16" stroke-width=".8"/>
<rect x="1273" y="265.5" width="78" height="96.8" rx="15" ry="15"/>
<path d="M1287,256 L1291,261.6 V265.5 M1336,256 L1332,261.6 V265.5 M1262.5,284 L1268.8,286 H1273 M1361,284 L1354.5,286 H1351 M1268.8,345 H1273 M1354.5,345 H1351 M1291,362.3 V367 L1287,371 M1332,362.3 V367 L1336,371" stroke-width=".8"/>
<circle cx="1123" cy="445.4" r="16" stroke-width="1.1"/><circle cx="1123" cy="445.4" r="14" stroke-width=".9"/>
<circle cx="1123" cy="719.8" r="16" stroke-width="1.1"/><circle cx="1123" cy="719.8" r="14" stroke-width=".9"/>
<rect x="1328.5" y="429.3" width="32.5" height="26" rx="12.5" stroke-width="1.1"/><rect x="1331" y="431.3" width="27.5" height="22" rx="10.5" stroke-width=".9"/>
<rect x="1328.5" y="710" width="32.5" height="26" rx="12.5" stroke-width="1.1"/><rect x="1331" y="712" width="27.5" height="22" rx="10.5" stroke-width=".9"/>
<ellipse cx="1113" cy="582" rx="57" ry="53"/><ellipse cx="1117" cy="582.5" rx="43.5" ry="41.5"/><ellipse cx="1122" cy="582.5" rx="31" ry="33" stroke-width=".8"/><ellipse cx="1122" cy="582.3" rx="18" ry="21" stroke-width="1.3"/>
<rect x="1069" y="571.5" width="101" height="21" stroke-width="1.2"/><path d="M1069,582 H1170 M1090,571.5 V592.5 M1156,571.5 V592.5 M1163,571.5 V592.5" stroke-width=".8"/>
</g>
<path d="M677,944 L699,966 H690 L668,944Z" fill="#000"/>
<path d="M677.5,944 H684 L704,962 L697,962Z" fill="#6fdbe6"/><path d="M684,944 H693 L708,958 L704,962Z" fill="#1f7890"/><path d="M693,944 H701 V955Z" fill="#2a9dbb"/>
<rect x="701" y="944" width="14.5" height="22" fill="#2591ae"/><rect x="715.5" y="944" width="33.5" height="13" fill="#7be6f3"/><rect x="749" y="944" width="18.5" height="22" fill="#35b0c4"/><rect x="767.5" y="944" width="8" height="22" fill="#1f7f95"/><rect x="775.5" y="944" width="18.5" height="22" fill="#45bdd2"/>
<rect x="715.5" y="957" width="56" height="9" fill="#1f7690"/>
<path d="M650,930 H659.3 V958.2 H700 V955 L720.6,965 L712,968 H650Z" fill="#fff"/>
<g stroke="#fff" stroke-width="1.8" fill="none"><path d="M409,977 V950 M409,977 H436"/><path d="M406.5,957 L409,947 L411.5,957Z M431,974.5 L440,977 L431,979.5Z" stroke-width="1"/></g>
<rect x="406.5" y="974.5" width="5.5" height="5" fill="#3fd9c8"/>
<text x="412.5" y="972.8" font-family="Liberation Sans,sans-serif" font-size="14" fill="#3fcfbf">Z</text>
<text x="440.5" y="973.8" font-family="Liberation Sans,sans-serif" font-size="14.5" font-weight="bold" fill="#fff">X</text>
</svg>
<div class="a" style="left:1403px;top:37px;width:48px;height:48px;background:#8493a0"></div>
<div class="t" style="left:1403px;top:45px;width:48px;text-align:center;font-size:26px;line-height:32px;height:32px;color:#6b7c8b">上</div>
</div>
<div id="rtool" class="a">
<div class="a" style="left:0;top:0;width:54px;height:36px;background:#f5f5f5;border-bottom:1px solid #dcdcdc"></div>
<svg style="left:39px;top:14px" width="9" height="9" viewBox="0 0 9 9"><path d="M1,1 L8,8 M8,1 L1,8" stroke="#555" stroke-width="1.4"/></svg>
<svg style="left:14px;top:46px" width="32" height="32" viewBox="0 0 32 32"><rect x="2" y="0" width="7" height="31" fill="#d9d9d9" stroke="#b5b5b5" stroke-width=".7"/><rect x="9" y="6" width="14" height="5" fill="#39b8b0"/><rect x="9" y="25" width="20" height="5" fill="#39b8b0"/><rect x="22" y="2" width="8" height="13" rx="2" fill="#d9d9d9" stroke="#b5b5b5" stroke-width=".7"/><rect x="24.5" y="15" width="3.5" height="6" fill="#e5a010"/></svg>
<svg style="left:44px;top:75px" width="5" height="5" viewBox="0 0 5 5"><path d="M5,0 V5 H0Z" fill="#111"/></svg>
<svg style="left:14px;top:86px" width="32" height="32" viewBox="0 0 32 32"><path d="M1,8 L8,1 H31 L24,8Z" fill="#5a9fdc"/><path d="M1,8 H24 V31 H1Z M24,8 L31,1 V24 L24,31 M8,1 V24 H31 M8,24 L1,31" fill="none" stroke="#444" stroke-width="1"/></svg>
<svg style="left:44px;top:115px" width="5" height="5" viewBox="0 0 5 5"><path d="M5,0 V5 H0Z" fill="#111"/></svg>
<svg style="left:14px;top:125px" width="32" height="32" viewBox="0 0 32 32"><path d="M16,1 L30,8 V24 L16,31 L2,24 V8Z" fill="#fff" stroke="#555" stroke-width="1.1"/><path d="M2,8 L16,15 L30,8 M16,15 V31" fill="none" stroke="#555" stroke-width="1"/><path d="M7,13 H25 L16,22Z" fill="#4aa3df"/></svg>
<svg style="left:44px;top:155px" width="5" height="5" viewBox="0 0 5 5"><path d="M5,0 V5 H0Z" fill="#111"/></svg>
<svg style="left:14px;top:167px" width="32" height="32" viewBox="0 0 32 32"><circle cx="9" cy="20" r="7" fill="none" stroke="#5a5a5a" stroke-width="2"/><path d="M14,25 L22,31" stroke="#5a5a5a" stroke-width="3.2" stroke-linecap="round"/><path d="M19,4 A7,7 0 1 1 18,13" fill="none" stroke="#2b8fd6" stroke-width="2"/><path d="M15,3 L21,1.5 L20.5,7.5Z" fill="#2b8fd6"/></svg>
<svg style="left:14px;top:213px" width="32" height="34" viewBox="0 0 32 34"><path d="M6,1 H18 L28,10 V30 H6Z" fill="#f8f8f8" stroke="#8a8a8a" stroke-width="1"/><path d="M18,1 L28,10 H18Z" fill="#666"/><path d="M16,24 A6,6 0 0 1 27,21 M29,26 A6,6 0 0 1 18,29" fill="none" stroke="#2b8fd6" stroke-width="2.2"/><path d="M28,17 L29,23 L23.5,22Z M17,33 L16,27 L21.5,28Z" fill="#2b8fd6"/></svg>
<svg style="left:14px;top:261px" width="32" height="32" viewBox="0 0 32 32"><circle cx="9" cy="20" r="7" fill="none" stroke="#5a5a5a" stroke-width="2"/><path d="M14,25 L22,31" stroke="#5a5a5a" stroke-width="3.2" stroke-linecap="round"/><rect x="17" y="1" width="14" height="14" fill="#fff" stroke="#555" stroke-width="1"/><path d="M19.5,3.5 L28.5,12.5 M28.5,3.5 L19.5,12.5" stroke="#555" stroke-width="1"/><path d="M19.5,6 V3.5 H22 M26,3.5 H28.5 V6 M28.5,10 V12.5 H26 M22,12.5 H19.5 V10" fill="none" stroke="#555" stroke-width="1"/></svg>
<svg style="left:14px;top:307px" width="32" height="32" viewBox="0 0 32 32"><circle cx="9" cy="18" r="7" fill="none" stroke="#5a5a5a" stroke-width="2"/><path d="M14,23 L22,29" stroke="#5a5a5a" stroke-width="3.2" stroke-linecap="round"/><rect x="18" y="1" width="13" height="8" fill="#fff" stroke="#555" stroke-width="1"/></svg>
<svg style="left:44px;top:336px" width="5" height="5" viewBox="0 0 5 5"><path d="M5,0 V5 H0Z" fill="#111"/></svg>
<div class="a" style="left:10px;top:350px;width:40px;height:39px;background:#cfe6fa;border:1px solid #a9d2f3"></div>
<svg style="left:14px;top:355px" width="32" height="32" viewBox="0 0 32 32"><path d="M2,10 L10,2 H30 L22,10Z" fill="#9fd0f3"/><path d="M2,10 H22 V30 H2Z" fill="#5aaae6"/><path d="M2,10 H22 L2,30Z" fill="#7fc0ee"/><path d="M22,10 L30,2 V22 L22,30Z" fill="#3f8fd0"/></svg>
<svg style="left:44px;top:383px" width="5" height="5" viewBox="0 0 5 5"><path d="M5,0 V5 H0Z" fill="#111"/></svg>
<svg style="left:14px;top:401px" width="32" height="32" viewBox="0 0 32 32"><path d="M1,8 H24 V31 H1Z M1,8 L8,1 H31 L24,8 M31,1 V24 L24,31 M8,1 V24 H31 M8,24 L1,31" fill="none" stroke="#444" stroke-width="1"/></svg>
<div class="a" style="left:10px;top:444px;width:40px;height:39px;background:#cfe6fa;border:1px solid #a9d2f3"></div>
<svg style="left:14px;top:448px" width="32" height="32" viewBox="0 0 32 32"><path d="M2,9 L9,2 H30 V23 L23,30 H2Z" fill="#8cc6f0"/><path d="M2,9 H23 V30 H2Z M2,9 L9,2 H30 L23,9 M30,2 V23 L23,30 M9,2 V23 H30 M9,23 L2,30" fill="none" stroke="#3f8fd0" stroke-width="1.1"/></svg>
<svg style="left:14px;top:492px" width="32" height="32" viewBox="0 0 32 32"><path d="M9,16 H2 V31 H31 V16 H24" fill="none" stroke="#444" stroke-width="1"/><path d="M11,1 L26,15 L19,15.5 L22.5,23 L19,24.5 L15.5,17 L11,21Z" fill="#2b8fd6"/></svg>
<svg style="left:44px;top:521px" width="5" height="5" viewBox="0 0 5 5"><path d="M5,0 V5 H0Z" fill="#111"/></svg>
<svg style="left:14px;top:537px" width="32" height="32" viewBox="0 0 32 32"><path d="M2,2 L20,17 L12,18 L16,27 L12,29 L8,20 L2,25Z" fill="#2b8fd6"/><path d="M22,4 A5,5 0 1 1 20,12" fill="none" stroke="#777" stroke-width="1.3"/><path d="M18,3 L23,2 L22.5,7Z" fill="#777"/></svg>
</div>
<div id="status" class="a">
<svg style="left:4px;top:4px" width="26" height="26" viewBox="0 0 26 26"><path d="M2,23 V4" stroke="#2b8fd0" stroke-width="1.2"/><path d="M0,6 L2,1 L4,6Z" fill="#2b8fd0"/><path d="M2,23 H22" stroke="#e33a4b" stroke-width="1.2"/><path d="M2,23 L20,5" stroke="#2e9b5b" stroke-width="1.2"/><path d="M17,5 L22,3 L20,8Z" fill="#2e9b5b"/><rect x="21" y="1" width="3" height="3" fill="#2b8fd0"/><path d="M18,26 L24,20 V26Z" fill="#111"/></svg>
<div class="a" style="left:33px;top:6px;width:87px;height:22px;background:#e1e1e1"></div>
<svg style="left:106px;top:14px" width="10" height="7" viewBox="0 0 10 7"><path d="M1,1 L5,5.5 L9,1" fill="none" stroke="#444" stroke-width="1.3"/></svg>
<svg style="left:126px;top:5px" width="22" height="22" viewBox="0 0 22 22"><path d="M2,14 L8,4 L12,12 L7,19Z" fill="#3f8fd0"/><path d="M8,4 V1 M12,12 L17,15" stroke="#555"/><path d="M15,2 L21,9 M21,2 L15,9" stroke="#3f8fd0" stroke-width="1.2"/></svg>
<svg style="left:152px;top:5px" width="22" height="22" viewBox="0 0 22 22"><path d="M11,1 L17,12 L11,9 L6,13Z" fill="#3f8fd0"/><path d="M11,9 V15 M6,13 L2,17 M17,12 L20,16" stroke="#555"/><path d="M9,16 L11.5,19 V22 M14,16 L11.5,19" stroke="#3f8fd0" stroke-width="1.2" fill="none"/></svg>
<div class="a" style="left:178px;top:4px;width:24px;height:24px;background:#b9d9f5"></div>
<svg style="left:179px;top:5px" width="22" height="22" viewBox="0 0 22 22"><path d="M11,8 L20,15 L11,21 L2,15Z" fill="#3f8fd0"/><path d="M11,3 V14" stroke="#555"/><path d="M4,2 H9 L4,8 H9" stroke="#3f8fd0" stroke-width="1.1" fill="none"/></svg>
<svg style="left:205px;top:5px" width="20" height="24" viewBox="0 0 20 24"><path d="M4,3 Q8,-1 12,3 Q9,5 6,4" fill="none" stroke="#111" stroke-width="1.6"/><path d="M5,7 Q4,4 7,4" fill="none" stroke="#111" stroke-width="1.4"/><rect x="5" y="9" width="12" height="12" rx="1.5" fill="#c8c8c8" stroke="#111" stroke-width="1.4"/><path d="M7,13 H15 M7,16 H15" stroke="#555"/></svg>
<svg style="left:244px;top:7px" width="20" height="20" viewBox="0 0 20 20"><path d="M1,4 H19 M1,8 H19 M1,12 H19 M1,16 H19 M4,1 V19 M8,1 V19 M12,1 V19 M16,1 V19" stroke="#c4c4c4" stroke-width="1"/></svg>
<div class="a" style="left:270px;top:6px;width:51px;height:22px;background:#f4f4f4;border:1px solid #d4d4d4"></div>
<div class="a" style="left:335px;top:6px;width:56px;height:22px;background:#fdfdfd;border:1px solid #9a9a9a"></div>
<div class="t" style="left:339px;top:9px;color:#222">213.193</div>
<div class="a" style="left:395px;top:6px;width:56px;height:22px;background:#fdfdfd;border:1px solid #9a9a9a"></div>
<div class="t" style="left:399px;top:9px;color:#222">226.719</div>
<div class="a" style="left:455px;top:6px;width:56px;height:22px;background:#fdfdfd;border:1px solid #9a9a9a"></div>
<div class="t" style="left:459px;top:9px;color:#222">0</div>
<svg style="left:517px;top:8px" width="18" height="18" viewBox="0 0 18 18"><rect x="1" y="1" width="16" height="16" fill="none" stroke="#cfcfcf"/><path d="M4,5 H7 M4,9 H7 M4,13 H7 M10,3 V15" stroke="#cfcfcf"/></svg>
<svg style="left:543px;top:8px" width="18" height="18" viewBox="0 0 18 18"><path d="M4,14 L14,4" stroke="#cfcfcf" stroke-width="1.5"/><circle cx="4" cy="14" r="2.5" fill="#cfcfcf"/><circle cx="14" cy="4" r="2.5" fill="#cfcfcf"/></svg>
<div class="a" style="left:570px;top:6px;width:88px;height:22px;background:#f4f4f4;border:1px solid #d4d4d4"></div>
<svg style="left:673px;top:7px" width="20" height="22" viewBox="0 0 20 22"><rect x="1" y="1" width="13" height="16" fill="#d9dde2" stroke="#7d8791"/><g fill="#8a9299"><rect x="3" y="3" width="2" height="2"/><rect x="7" y="3" width="2" height="2"/><rect x="3" y="7" width="2" height="2"/><rect x="7" y="7" width="2" height="2"/><rect x="3" y="11" width="2" height="2"/><rect x="7" y="11" width="2" height="2"/></g><rect x="13" y="11" width="2.5" height="9" fill="#2b8fd6"/><rect x="17" y="11" width="2.5" height="9" fill="#2b8fd6"/></svg>
<svg style="left:709px;top:7px" width="24" height="22" viewBox="0 0 24 22"><path d="M1,2 V10 M23,2 V10 M1,6 H23 M4,4 V8 M7,4 V8 M10,4 V8 M13,4 V8 M16,4 V8 M19,4 V8" stroke="#2b8fd6" stroke-width="1"/><text x="1" y="21" font-family="Liberation Sans,sans-serif" font-size="9" fill="#2b6fb6" letter-spacing="3.5">012</text></svg>
<div class="a" style="left:735px;top:6px;width:56px;height:22px;background:#fdfdfd;border:1px solid #9a9a9a"></div>
<div class="t" style="left:739px;top:9px;color:#222">毫米</div>
<svg style="left:798px;top:8px" width="19" height="19" viewBox="0 0 19 19"><circle cx="9.5" cy="9.5" r="7" fill="none" stroke="#2b6fb6" stroke-width="1.3"/><path d="M9.5,0 V19 M0,9.5 H19" stroke="#2b6fb6" stroke-width="1.1"/></svg>
<div class="a" style="left:821px;top:6px;width:56px;height:22px;background:#fdfdfd;border:1px solid #9a9a9a"></div>
<div class="t" style="left:825px;top:9px;color:#222">0.03</div>
<svg style="left:883px;top:7px" width="20" height="18" viewBox="0 0 20 18"><path d="M9,2 H17 V10 Q17,13 13,13 Q9,13 9,10Z" fill="#eaf4fc" stroke="#1d5e8a" stroke-width="1.1"/><path d="M1,10 H8" stroke="#1d5e8a" stroke-width="1.6" stroke-dasharray="1 1"/></svg>
<div class="a" style="left:907px;top:6px;width:56px;height:22px;background:#fdfdfd;border:1px solid #9a9a9a"></div>
<div class="t" style="left:911px;top:9px;color:#222">0.0</div>
<svg style="left:975px;top:6px" width="14" height="24" viewBox="0 0 14 24"><path d="M3,1.5 H11 V11 Q11,14 7,14 Q3,14 3,11Z" fill="#eaf4fc" stroke="#2a7fc0" stroke-width="1.1"/><path d="M4,17 H10 M5,19.5 H9 M6,22 H8" stroke="#2a7fc0" stroke-width="1"/></svg>
<div class="a" style="left:993px;top:6px;width:56px;height:22px;background:#fdfdfd;border:1px solid #9a9a9a"></div>
<div class="t" style="left:997px;top:9px;color:#222">-1.0</div>
<svg style="left:1056px;top:8px" width="18" height="18" viewBox="0 0 18 18"><circle cx="9" cy="9" r="6.5" fill="none" stroke="#2b6fb6" stroke-width="1.3"/><path d="M2,16 L16,2" stroke="#2b6fb6" stroke-width="1.3"/></svg>
<div class="a" style="left:1079px;top:6px;width:56px;height:22px;background:#fdfdfd;border:1px solid #9a9a9a"></div>
<div class="t" style="left:1083px;top:9px;color:#222">8.0</div>
<svg style="left:1140px;top:8px" width="20" height="20" viewBox="0 0 20 20"><path d="M18,2 L3,17 M3,8 V17 H12" fill="none" stroke="#2b8fd6" stroke-width="1.4"/></svg>
<div class="a" style="left:1165px;top:6px;width:56px;height:22px;background:#fdfdfd;border:1px solid #9a9a9a"></div>
<div class="t" style="left:1169px;top:9px;color:#222">4.0</div>
<div class="t" style="left:1229px;top:9px;color:#222">转速</div>
<div class="a" style="left:1255px;top:6px;width:56px;height:22px;background:#fdfdfd;border:1px solid #9a9a9a"></div>
<div class="t" style="left:1259px;top:9px;color:#222">1500.0</div>
<div class="t" style="left:1319px;top:9px;color:#222">进给</div>
<div class="a" style="left:1345px;top:6px;width:56px;height:22px;background:#fdfdfd;border:1px solid #9a9a9a"></div>
<div class="t" style="left:1349px;top:9px;color:#222">1000.0</div>
<div class="t" style="left:1409px;top:9px;color:#222">行距</div>
<div class="a" style="left:1435px;top:6px;width:56px;height:22px;background:#fdfdfd;border:1px solid #9a9a9a"></div>
<div class="t" style="left:1439px;top:9px;color:#222">0.2</div>
<div class="t" style="left:1499px;top:9px;color:#222">下切</div>
<div class="a" style="left:1525px;top:6px;width:56px;height:22px;background:#fdfdfd;border:1px solid #9a9a9a"></div>
<div class="t" style="left:1529px;top:9px;color:#222">5.0</div>
</div>
<div id="taskbar" class="a">
<svg style="left:16px;top:12px" width="17" height="17" viewBox="0 0 17 17"><path d="M0,2.3 L7,1.3 V8 H0Z M8,1.2 L17,0 V8 H8Z M0,9 H7 V15.7 L0,14.7Z M8,9 H17 V17 L8,15.8Z" fill="#111"/></svg>
<div class="a" style="left:51px;top:0;width:160px;height:40px;background:rgba(255,255,255,.45)"></div>
<div class="a" style="left:51px;top:38px;width:160px;height:2px;background:#2f7fd0"></div>
<div class="a" style="left:60px;top:8px;width:22px;height:24px;background:#f7e4c2;border-radius:2px"></div>
<svg style="left:63px;top:10px" width="16" height="19" viewBox="0 0 14 17"><path d="M1,16 V2 H8 Q13,2 13,6.5 Q13,11 8,11 H5.5 V16Z M5.5,5 V8 H8 Q9,8 9,6.5 Q9,5 8,5Z" fill="#e8922c" fill-rule="evenodd"/><path d="M1,16 V9 L5.5,11 V16Z" fill="#a85c10"/></svg>
<div class="t" style="left:89px;top:11px;font-size:12.5px;line-height:17px;height:17px;color:#111">Autodesk Power...</div>
<svg style="left:1657px;top:15px" width="13" height="8" viewBox="0 0 13 8"><path d="M1,7 L6.5,1.5 L12,7" fill="none" stroke="#111" stroke-width="1.3"/></svg>
<svg style="left:1682px;top:10px" width="11" height="20" viewBox="0 0 11 20"><rect x="2.5" y="1" width="6" height="11" rx="3" fill="#111"/><path d="M1,9 Q1,15 5.5,15 Q10,15 10,9 M5.5,15 V18 M2.5,18.5 H8.5" fill="none" stroke="#111" stroke-width="1.2"/></svg>
<svg style="left:1703px;top:11px" width="17" height="17" viewBox="0 0 17 17"><circle cx="8.5" cy="8.5" r="8" fill="#e0181c"/><ellipse cx="8.5" cy="9" rx="5" ry="3.2" fill="#222"/><path d="M3,6.5 H14" stroke="#222" stroke-width="1.6"/><path d="M5,9 H12" stroke="#f4d0a0" stroke-width="1"/></svg>
<svg style="left:1727px;top:12px" width="18" height="16" viewBox="0 0 18 16"><rect x="4" y="2" width="12" height="9" fill="none" stroke="#111" stroke-width="1.2"/><path d="M7,14.5 H13 M10,11 V14.5" stroke="#111" stroke-width="1.2"/><rect x="0.6" y="0.6" width="5" height="7" fill="#dcebf0" stroke="#111" stroke-width="1.1"/></svg>
<svg style="left:1751px;top:12px" width="18" height="16" viewBox="0 0 18 16"><path d="M1,5.5 H4 L8,2 V14 L4,10.5 H1Z" fill="none" stroke="#111" stroke-width="1.1"/><path d="M10,5.5 Q11.5,8 10,10.5" fill="none" stroke="#111" stroke-width="1"/><path d="M12.5,4 Q15,8 12.5,12" fill="none" stroke="#666" stroke-width="1"/><path d="M15,2.5 Q18.5,8 15,13.5" fill="none" stroke="#999" stroke-width="1"/></svg>
<div class="t" style="left:1775px;top:10px;font-size:15px;line-height:20px;height:20px;color:#111">中</div>
<div class="t" style="left:1795px;top:3px;width:70px;text-align:center;font-size:12px;color:#111">14:46</div>
<div class="t" style="left:1795px;top:21px;width:70px;text-align:center;font-size:12px;color:#111">2021/12/12</div>
<svg style="left:1879px;top:11px" width="17" height="18" viewBox="0 0 17 18"><path d="M1,1 H16 V13 H11 L8.5,16.5 V13 H1Z" fill="none" stroke="#111" stroke-width="1.2"/></svg>
<div class="a" style="left:1915px;top:0;width:1px;height:40px;background:#a8b8bf"></div>
</div>

<div id="dialog" class="a">
<div class="a" style="left:0;top:0;width:665px;height:30px;background:#fff"></div>
<svg style="left:11px;top:7px" width="12" height="15" viewBox="0 0 14 17"><path d="M1,16 V2 H8 Q13,2 13,6.5 Q13,11 8,11 H5.5 V16Z M5.5,5 V8 H8 Q9,8 9,6.5 Q9,5 8,5Z" fill="#e8922c" fill-rule="evenodd"/><path d="M1,16 V9 L5.5,11 V16Z" fill="#b96a18"/></svg>
<div class="t" style="left:29px;top:7px;color:#9a9a9a">参考线精加工</div>
<div class="t" style="left:594px;top:6px;color:#8a8a8a;font-size:12px">?</div>
<svg style="left:638px;top:9px" width="11" height="11" viewBox="0 0 11 11"><path d="M0.5,0.5 L10.5,10.5 M10.5,0.5 L0.5,10.5" stroke="#777" stroke-width="1"/></svg>
<div class="a" style="left:10px;top:40px;width:32px;height:32px;background:#d2d2d2;border:1px solid #c4c4c4"></div>
<svg style="left:14px;top:44px" width="24" height="24" viewBox="0 0 24 24"><g fill="#e6e6e6" stroke="#c2c2c2" stroke-width=".8"><circle cx="12" cy="5.5" r="4"/><circle cx="18" cy="9.5" r="4"/><circle cx="17" cy="16.5" r="4"/><circle cx="7" cy="16.5" r="4"/><circle cx="6" cy="9.5" r="4"/></g><circle cx="12" cy="12" r="3" fill="#d2d2d2"/></svg>
<div class="a" style="left:47px;top:40px;width:32px;height:32px;background:#e4e4e4;border:1px solid #b5b5b5"></div>
<svg style="left:51px;top:43px" width="25" height="26" viewBox="0 0 25 26"><rect x="0.5" y="0.5" width="14" height="21" fill="#e9dcc0" stroke="#333" stroke-width="1"/><rect x="10" y="3.5" width="14" height="22" fill="#e9dcc0" stroke="#333" stroke-width="1"/><g stroke-width="2.6" fill="none"><path d="M3,3 Q8,7 4,11 Q1,15 6,19" stroke="#d23b3b"/><path d="M8,2 Q4,7 9,11 Q13,15 8,20" stroke="#2b6fd0"/><path d="M13,6 Q18,10 14,14 Q11,18 16,23" stroke="#d23b3b"/><path d="M19,5 Q15,10 20,14 Q23,18 19,23" stroke="#2b6fd0"/></g></svg>
<div class="t" style="left:178px;top:46px">刀具路径名称</div>
<div class="a" style="left:260px;top:44px;width:392px;height:24px;background:#fff;border:1px solid #7a7a7a"></div>
<div class="t" style="left:264px;top:48px">1</div>
<div class="a" style="left:11px;top:82px;width:239px;height:582px;background:#fff;border:1px solid #828790"></div>
<div class="a" style="left:260px;top:83px;width:392px;height:31px;border:1px solid #1f3f7a;border-radius:5px 5px 2px 2px;background:linear-gradient(#7da7cf 0%,#8fb6da 30%,#b5d3ec 100%)"></div>
<div class="t" style="left:264px;top:87px;font-size:17.5px;line-height:24px;height:24px;color:#222">参考线精加工</div>
<div class="a" style="left:273px;top:137px;width:363px;height:112px;border:1px solid #dcdcdc"></div>
<div class="t" style="left:279px;top:129px;background:#f0f0f0;padding:0 2px;">驱动曲线</div>
<div class="a" style="left:273px;top:262px;width:363px;height:108px;border:1px solid #dcdcdc"></div>
<div class="t" style="left:279px;top:254px;background:#f0f0f0;padding:0 2px;">下限</div>
<div class="a" style="left:273px;top:388px;width:363px;height:48px;border:1px solid #dcdcdc"></div>
<div class="t" style="left:279px;top:380px;background:#f0f0f0;padding:0 2px;">避免过切</div>
<div class="a" style="left:273px;top:526px;width:363px;height:72px;border:1px solid #dcdcdc"></div>
<div class="t" style="left:279px;top:518px;background:#f0f0f0;padding:0 2px;">余量</div>
<div class="a" style="left:273px;top:611px;width:363px;height:72px;border:1px solid #dcdcdc"></div>
<div class="t" style="left:279px;top:603px;background:#f0f0f0;padding:0 2px;">最大下切步距</div>
<div class="a" style="left:285px;top:165px;width:13px;height:13px;background:#fff;border:1px solid #333"></div>
<div class="t" style="left:301px;top:163px">使用刀具路径</div>
<div class="a" style="left:285px;top:201px;width:24px;height:24px;background:#e9e9e9;border:1px solid #c0c0c0"></div>
<svg style="left:287px;top:203px" width="20" height="20" viewBox="0 0 20 20"><path d="M2,2 Q10,8 18,2 Q12,10 18,18 Q10,12 2,18 Q8,10 2,2Z" fill="#bfe0f2" stroke="#2a7fb0" stroke-width="1.2" stroke-linejoin="round"/><path d="M1,3.5 H6 M3.5,1 V6 M1.7,1.7 L5.3,5.3 M5.3,1.7 L1.7,5.3" stroke="#e8212f" stroke-width="1"/></svg>
<div class="a" style="left:321px;top:201px;width:201px;height:25px;background:#e1e1e1;border:1px solid #bdbdbd"></div>
<svg style="left:507px;top:211px" width="9" height="6" viewBox="0 0 9 6"><path d="M0.5,0.5 L4.5,4.5 L8.5,0.5" fill="none" stroke="#444" stroke-width="1.1"/></svg>
<div class="a" style="left:530px;top:201px;width:24px;height:24px;background:#e9e9e9;border:1px solid #c0c0c0"></div>
<svg style="left:532px;top:203px" width="20" height="20" viewBox="0 0 20 20"><path d="M2,2 Q10,8 18,2 Q12,10 18,18 Q10,12 2,18 Q8,10 2,2Z" fill="#bfe0f2" stroke="#2a7fb0" stroke-width="1.2" stroke-linejoin="round"/><path d="M10,12 L16,3 Q18,2 18.5,4 L13,13Z" fill="#4aa3df" stroke="#1d5e8a" stroke-width=".6"/><circle cx="10" cy="13" r="1.6" fill="#222"/></svg>
<div class="a" style="left:566px;top:201px;width:24px;height:24px;background:#e9e9e9;border:1px solid #c0c0c0"></div>
<svg style="left:568px;top:203px" width="20" height="20" viewBox="0 0 20 20"><path d="M2,2 Q10,8 18,2 Q12,10 18,18 Q10,12 2,18 Q8,10 2,2Z" fill="#b5e2d8" stroke="#1f7a6a" stroke-width="1.2" stroke-linejoin="round"/><path d="M8,3 L8,15 L11,12.5 L13,17 L14.6,16.2 L12.6,12 L16,11.5Z" fill="#fff" stroke="#111" stroke-width=".9"/></svg>
<div class="a" style="left:600px;top:201px;width:24px;height:24px;background:#e9e9e9;border:1px solid #c0c0c0"></div>
<svg style="left:602px;top:203px" width="20" height="20" viewBox="0 0 20 20"><path d="M7,2 H13 V7 H18 V13 H13 V18 H7 V13 H2 V7 H7Z" fill="#bfe0f2" stroke="#1d5e8a" stroke-width="1.2" stroke-linejoin="round"/><path d="M10,5 V15 M5,10 H15" stroke="#111" stroke-width="1"/></svg>
<div class="t" style="left:426px;top:291px">底部位置</div>
<div class="a" style="left:482px;top:284px;width:144px;height:25px;background:#fff;border:1px solid #7a7a7a"></div>
<div class="t" style="left:487px;top:287.0px">驱动曲线</div>
<svg style="left:612px;top:294.5px" width="9" height="6" viewBox="0 0 9 6"><path d="M0.5,0.5 L4.5,4.5 L8.5,0.5" fill="none" stroke="#444" stroke-width="1.1"/></svg>
<div class="t" style="left:501px;top:332px;color:#0b6cc4;text-decoration:underline">轴向偏移</div>
<div class="a" style="left:556px;top:326px;width:70px;height:27px;background:#fff;border:1px solid #7a7a7a"></div>
<div class="t" style="left:561px;top:330.5px;color:#1a1a1a">0.0</div>
<div class="t" style="left:562px;top:406px">过切检查</div>
<div class="a" style="left:613px;top:407px;width:13px;height:13px;background:#fff;border:1px solid #333"></div>
<svg style="left:613px;top:407px" width="13" height="13" viewBox="0 0 13 13"><path d="M3,6.5 L5.5,9.2 L10.2,3.3" fill="none" stroke="#222" stroke-width="1.2"/></svg>
<div class="t" style="left:285px;top:448px">公差</div>
<div class="a" style="left:285px;top:475px;width:70px;height:26px;background:#fff;border:1px solid #7a7a7a"></div>
<div class="t" style="left:290px;top:479.0px;color:#1a1a1a">0.03</div>
<div class="t" style="left:482px;top:448px">加工顺序</div>
<div class="a" style="left:482px;top:475px;width:144px;height:25px;background:#fff;border:1px solid #7a7a7a"></div>
<div class="t" style="left:487px;top:478.0px">参考线</div>
<svg style="left:612px;top:485.5px" width="9" height="6" viewBox="0 0 9 6"><path d="M0.5,0.5 L4.5,4.5 L8.5,0.5" fill="none" stroke="#444" stroke-width="1.1"/></svg>
<div class="a" style="left:284px;top:549px;width:25px;height:25px;background:#cde4f7;border:1px solid #3f8fd0"></div>
<svg style="left:286px;top:551px" width="21" height="21" viewBox="0 0 21 21"><path d="M9,2 H17 V10 Q17,13 13,13 Q9,13 9,10Z" fill="#eaf4fc" stroke="#1d5e8a" stroke-width="1.1"/><path d="M1,11 H8" stroke="#1d5e8a" stroke-width="1.6" stroke-dasharray="1 1"/></svg>
<div class="a" style="left:321px;top:551px;width:70px;height:27px;background:#fff;border:1px solid #7a7a7a"></div>
<div class="t" style="left:326px;top:555.5px;color:#1a1a1a">0.0</div>
<svg style="left:455px;top:551px" width="14" height="22" viewBox="0 0 14 22"><path d="M3,1.5 H11 V10 Q11,13 7,13 Q3,13 3,10Z" fill="#eaf4fc" stroke="#2a7fc0" stroke-width="1.1"/><path d="M4,15.5 H10 M5,18 H9 M6,20.5 H8" stroke="#2a7fc0" stroke-width="1"/></svg>
<div class="a" style="left:478px;top:551px;width:71px;height:27px;background:#fff;border:1px solid #7a7a7a"></div>
<div class="t" style="left:483px;top:555.5px;color:#1a1a1a">-1.0</div>
<div class="a" style="left:600px;top:548px;width:24px;height:24px;background:#e4e4e4;border:1px solid #bdbdbd"></div>
<svg style="left:602px;top:550px" width="20" height="20" viewBox="0 0 20 20"><path d="M1,19 V12 Q6,18 12,14 Q16,11 19,12 V19Z" fill="#39b8b0"/><path d="M2,9 Q3,16 9,16 Q15,16 16,10" fill="none" stroke="#e0283a" stroke-width="1.6"/><path d="M4,9 Q5,13.5 9,13.5 Q13,13.5 14,9" fill="none" stroke="#e0283a" stroke-width="1.2"/><path d="M7,0 H12 V8 Q12,11 9.5,12 Q7,11 7,8Z" fill="#e5a820" stroke="#7a5a08" stroke-width=".7"/><path d="M9.5,0 V10" stroke="#7a5a08" stroke-width=".8"/></svg>
<div class="a" style="left:285px;top:633px;width:25px;height:25px;background:#d2d2d2;border:1px solid #c6c6c6"></div>
<svg style="left:290px;top:636px" width="14" height="20" viewBox="0 0 14 20"><path d="M1,1 H9 V4 H8 V16 L5,18 L2,16 V4 H1Z" fill="#bdbdbd" stroke="#a8a8a8" stroke-width=".8"/><path d="M9,17 H13" stroke="#b0b0b0" stroke-dasharray="1 1"/></svg>
<div class="a" style="left:326px;top:635px;width:71px;height:26px;background:#f0f0f0;border:1px solid #c8c8c8"></div>
<div class="t" style="left:331px;top:639.0px;color:#a0a0a0">1.0</div>
<div class="a" style="left:359px;top:697px;width:86px;height:28px;background:#e1e1e1;border:1px solid #adadad"></div>
<div class="t" style="left:359px;top:702.5px;width:86px;text-align:center">预览</div>
<div class="a" style="left:458px;top:705px;width:13px;height:13px;background:#fff;border:1px solid #333"></div>
<div class="t" style="left:474px;top:703px">绘制</div>
<div class="a" style="left:261px;top:788px;width:58px;height:28px;background:#e1e1e1;border:1px solid #adadad"></div>
<div class="t" style="left:261px;top:793.5px;width:58px;text-align:center">计算</div>
<div class="a" style="left:328px;top:788px;width:58px;height:28px;background:#e1e1e1;border:1px solid #adadad"></div>
<div class="t" style="left:328px;top:793.5px;width:58px;text-align:center">队列</div>
<div class="a" style="left:395px;top:788px;width:58px;height:28px;background:#e1e1e1;border:1px solid #adadad"></div>
<div class="t" style="left:395px;top:793.5px;width:58px;text-align:center">确定</div>
<div class="a" style="left:462px;top:788px;width:58px;height:28px;background:#e1e1e1;border:1px solid #adadad"></div>
<div class="t" style="left:462px;top:793.5px;width:58px;text-align:center">取消</div>
<div class="a" style="left:23px;top:93px;width:0;height:420px;border-left:1px dotted #9a9a9a"></div>
<div class="a" style="left:42px;top:223px;width:0;height:70px;border-left:1px dotted #9a9a9a"></div>
<div class="a" style="left:23px;top:93px;width:10px;height:0;border-top:1px dotted #9a9a9a"></div>
<svg style="left:33px;top:85px" width="17" height="17" viewBox="0 0 17 17"><path d="M3,15 V2" stroke="#2b8fd0" stroke-width="1"/><path d="M1.3,4 L3,0.5 L4.7,4Z" fill="#2b8fd0"/><path d="M3,15 H16" stroke="#e33a4b" stroke-width="1"/><path d="M14,13.3 L17,15 L14,16.7Z" fill="#e33a4b"/><path d="M5,11 L11,6" stroke="#2e9b5b" stroke-width="1"/></svg>
<div class="t" style="left:55px;top:85px">工作平面</div>
<div class="a" style="left:23px;top:113px;width:10px;height:0;border-top:1px dotted #9a9a9a"></div>
<svg style="left:33px;top:105px" width="17" height="17" viewBox="0 0 17 17"><path d="M1,5 L5,1 H16 V12 L12,16 H1Z" fill="#7ec3ef" stroke="#2f86c8" stroke-width="1"/><path d="M1,5 H12 V16 M12,5 L16,1" fill="none" stroke="#2f86c8" stroke-width="1"/></svg>
<div class="t" style="left:55px;top:105px">毛坯</div>
<div class="a" style="left:23px;top:133px;width:10px;height:0;border-top:1px dotted #9a9a9a"></div>
<svg style="left:33px;top:125px" width="17" height="17" viewBox="0 0 17 17"><path d="M5,0 H12 V10 Q12,15 8.5,16.5 Q5,15 5,10Z" fill="#e5b820" stroke="#8a6a08" stroke-width=".7"/><path d="M8.5,0 V13" stroke="#8a6a08" stroke-width=".8"/></svg>
<div class="t" style="left:55px;top:125px">刀具</div>
<div class="a" style="left:23px;top:153px;width:10px;height:0;border-top:1px dotted #9a9a9a"></div>
<svg style="left:33px;top:145px" width="17" height="17" viewBox="0 0 17 17"><path d="M1,1 H5 V12 H16 V16 H1Z" fill="#cfd4d8" stroke="#8a9299" stroke-width=".7"/><rect x="5" y="4" width="8" height="3" fill="#39b8a8"/><rect x="12" y="1" width="4" height="9" fill="#dfe3e6" stroke="#8a9299" stroke-width=".7"/><rect x="1" y="12" width="15" height="2" fill="#39b8a8"/></svg>
<div class="t" style="left:55px;top:145px">机床</div>
<div class="a" style="left:23px;top:173px;width:10px;height:0;border-top:1px dotted #9a9a9a"></div>
<svg style="left:33px;top:165px" width="17" height="17" viewBox="0 0 17 17"><g fill="none" stroke="#2fa88a" stroke-width="1.4"><path d="M1,14 Q1,7 4,7 Q6,7 5,12 Q5,5 8,5 Q10,5 9,10 Q9,3 12,3 Q14,3 13,8"/></g><path d="M11,2 L16,1 L15,9 L11,9Z" fill="#e5c030" opacity=".9"/></svg>
<div class="t" style="left:55px;top:165px">剪裁</div>
<div class="a" style="left:23px;top:193px;width:10px;height:0;border-top:1px dotted #9a9a9a"></div>
<svg style="left:33px;top:185px" width="17" height="17" viewBox="0 0 17 17"><path d="M1,9 H8 V16 H1Z" fill="#4a4a4a"/><path d="M1,9 L4,6 H10 L8,9Z" fill="#2fa88a"/><path d="M8,9 L10,6 V13 L8,16Z" fill="#1d6a5a"/><path d="M9,7 L15,1 L17,3 L11,9Z" fill="#e5c030" stroke="#8a6a08" stroke-width=".6"/></svg>
<div class="t" style="left:55px;top:185px">毛坯切削</div>
<div class="a" style="left:23px;top:213px;width:10px;height:0;border-top:1px dotted #9a9a9a"></div>
<svg style="left:18.5px;top:208.5px" width="9" height="9" viewBox="0 0 9 9"><rect x="0.5" y="0.5" width="8" height="8" fill="#fff" stroke="#9a9a9a"/><path d="M2,4.5 H7" stroke="#444"/></svg>
<svg style="left:33px;top:205px" width="17" height="17" viewBox="0 0 17 17"><rect width="17" height="17" fill="#14a9c9"/><path d="M2,2 Q8.5,8.5 15,2 Q8.5,8.5 15,15 Q8.5,8.5 2,15 Q8.5,8.5 2,2Z" fill="none" stroke="#1fe0b0" stroke-width="1.2"/></svg>
<div class="a" style="left:52px;top:203px;width:78px;height:20px;background:#ececec"></div>
<div class="t" style="left:55px;top:205px">参考线精加工</div>
<div class="a" style="left:42px;top:233px;width:10px;height:0;border-top:1px dotted #9a9a9a"></div>
<svg style="left:52px;top:225px" width="17" height="17" viewBox="0 0 17 17"><path d="M3,1 H8 V3 H7 V12 L5.5,15 L4,12 V3 H3Z" fill="#e5c030" stroke="#222" stroke-width=".9"/><path d="M9,5 H15 M9,8 H14 M9,11 H12" stroke="#222" stroke-width="1.2"/></svg>
<div class="t" style="left:74px;top:225px">高速</div>
<div class="a" style="left:42px;top:253px;width:10px;height:0;border-top:1px dotted #9a9a9a"></div>
<svg style="left:52px;top:245px" width="17" height="17" viewBox="0 0 17 17"><path d="M1,16 V9 L5,5 H12 L16,9 V16Z" fill="#8b8be8"/><path d="M1,5 Q4,5 6,3 Q8.5,0.5 11,3 Q13,5 16,5" fill="none" stroke="#2fa85a" stroke-width="1.6"/></svg>
<div class="t" style="left:74px;top:245px">避免过切</div>
<div class="a" style="left:42px;top:273px;width:10px;height:0;border-top:1px dotted #9a9a9a"></div>
<svg style="left:52px;top:265px" width="17" height="17" viewBox="0 0 17 17"><path d="M2,3 H15 M2,7 H15" stroke="#4fc46a" stroke-width="1.5"/><rect x="2" y="10" width="13" height="6" fill="#8b8be8"/></svg>
<div class="t" style="left:74px;top:265px">多重切削</div>
<div class="a" style="left:42px;top:293px;width:10px;height:0;border-top:1px dotted #9a9a9a"></div>
<svg style="left:52px;top:285px" width="17" height="17" viewBox="0 0 17 17"><path d="M1,1 H9 V4 H1Z" fill="#222"/><path d="M3,4 H8 V16 H3Z" fill="#e8901f" stroke="#222" stroke-width=".8"/><rect x="9" y="6" width="7" height="10" fill="#c9c9c9" stroke="#222" stroke-width=".9"/><path d="M10,5 L16,7" stroke="#e8212f" stroke-width="1.6"/></svg>
<div class="t" style="left:74px;top:285px">自动检查</div>
<div class="a" style="left:23px;top:313px;width:10px;height:0;border-top:1px dotted #9a9a9a"></div>
<svg style="left:33px;top:305px" width="17" height="17" viewBox="0 0 17 17"><path d="M3,3 L14,14" stroke="#222" stroke-width="1.6"/><path d="M8,2 L15,9 M2,8 L9,15" stroke="#222" stroke-width="1" stroke-dasharray="2 1"/><circle cx="3" cy="3" r="2" fill="#e8212f"/><circle cx="14" cy="14" r="2" fill="#e8212f"/><circle cx="8.5" cy="8.5" r="1.8" fill="#2b8fd0"/></svg>
<div class="t" style="left:55px;top:305px">点分布</div>
<div class="a" style="left:23px;top:333px;width:10px;height:0;border-top:1px dotted #9a9a9a"></div>
<svg style="left:33px;top:325px" width="17" height="17" viewBox="0 0 17 17"><path d="M3,15 V2 M3,15 H16" stroke="#39b8a8" stroke-width="1.6" fill="none"/><path d="M1,4 L3,0 L5,4Z M13,13 L17,15 L13,17Z" fill="#39b8a8"/><path d="M5,12 L12,2 L15,4 L8,13Z" fill="#e5c030" stroke="#8a6a08" stroke-width=".6"/><rect x="13" y="1" width="3" height="3" fill="#c9c9c9"/></svg>
<div class="t" style="left:55px;top:325px">刀轴</div>
<div class="a" style="left:23px;top:353px;width:10px;height:0;border-top:1px dotted #9a9a9a"></div>
<svg style="left:33px;top:345px" width="17" height="17" viewBox="0 0 17 17"><circle cx="8.5" cy="8.5" r="7.5" fill="#e5c030" stroke="#222" stroke-width="1.1"/><path d="M4,13 L13,4" stroke="#222" stroke-width="2.2"/><path d="M5,9 Q8.5,5 12,9" fill="none" stroke="#fff" stroke-width="1"/></svg>
<div class="t" style="left:55px;top:345px">加工轴控制</div>
<div class="a" style="left:23px;top:373px;width:10px;height:0;border-top:1px dotted #9a9a9a"></div>
<svg style="left:18.5px;top:368.5px" width="9" height="9" viewBox="0 0 9 9"><rect x="0.5" y="0.5" width="8" height="8" fill="#fff" stroke="#9a9a9a"/><path d="M2,4.5 H7" stroke="#444"/><path d="M4.5,2 V7" stroke="#444"/></svg>
<svg style="left:33px;top:365px" width="17" height="17" viewBox="0 0 17 17"><path d="M1,4 H11 M1,8.5 H11 M1,13 H11 M1,16.5 H16" stroke="#e8212f" stroke-width="2"/><path d="M10,0 H17 V3 L16,4 V10 Q16,13 13.5,14.5 Q11,13 11,10 V4 L10,3Z" fill="#e5b820"/><rect x="10" y="0" width="7" height="3" fill="#9a9a9a"/></svg>
<div class="t" style="left:55px;top:365px">快进移动</div>
<div class="a" style="left:23px;top:393px;width:10px;height:0;border-top:1px dotted #9a9a9a"></div>
<svg style="left:18.5px;top:388.5px" width="9" height="9" viewBox="0 0 9 9"><rect x="0.5" y="0.5" width="8" height="8" fill="#fff" stroke="#9a9a9a"/><path d="M2,4.5 H7" stroke="#444"/><path d="M4.5,2 V7" stroke="#444"/></svg>
<svg style="left:33px;top:385px" width="17" height="17" viewBox="0 0 17 17"><path d="M2,1 V10 Q2,15 7,15 L8.5,12 L10,15 Q15,15 15,10 V1" fill="none" stroke="#46d7e8" stroke-width="2.6"/><path d="M3,12 Q5,16 8.5,13 Q12,16 14,12" fill="none" stroke="#35c67a" stroke-width="2.4"/><path d="M6,0 H11 V9 Q11,12 8.5,13 Q6,12 6,9Z" fill="#e5b820" stroke="#8a6a08" stroke-width=".6"/></svg>
<div class="t" style="left:55px;top:385px">切入切出和连接</div>
<div class="a" style="left:23px;top:413px;width:10px;height:0;border-top:1px dotted #9a9a9a"></div>
<svg style="left:33px;top:405px" width="17" height="17" viewBox="0 0 17 17"><circle cx="6" cy="11" r="5.5" fill="#fff" stroke="#111" stroke-width="1"/><path d="M6,11 V5.5 A5.5,5.5 0 0 0 0.5,11Z M6,11 V16.5 A5.5,5.5 0 0 0 11.5,11Z" fill="#111"/><path d="M9,0 H16 V3 L15,4 V8 Q15,11 12.5,12 Q10,11 10,8 V4 L9,3Z" fill="#e5b820"/><rect x="9" y="0" width="7" height="3" fill="#9a9a9a"/></svg>
<div class="t" style="left:55px;top:405px">开始点</div>
<div class="a" style="left:23px;top:433px;width:10px;height:0;border-top:1px dotted #9a9a9a"></div>
<svg style="left:33px;top:425px" width="17" height="17" viewBox="0 0 17 17"><circle cx="6" cy="11" r="5.5" fill="#fff" stroke="#111" stroke-width="1"/><path d="M6,11 V5.5 A5.5,5.5 0 0 0 0.5,11Z M6,11 V16.5 A5.5,5.5 0 0 0 11.5,11Z" fill="#111"/><path d="M9,0 H16 V3 L15,4 V8 Q15,11 12.5,12 Q10,11 10,8 V4 L9,3Z" fill="#e5b820"/><rect x="9" y="0" width="7" height="3" fill="#9a9a9a"/></svg>
<div class="t" style="left:55px;top:425px">结束点</div>
<div class="a" style="left:23px;top:453px;width:10px;height:0;border-top:1px dotted #9a9a9a"></div>
<svg style="left:18.5px;top:448.5px" width="9" height="9" viewBox="0 0 9 9"><rect x="0.5" y="0.5" width="8" height="8" fill="#fff" stroke="#9a9a9a"/><path d="M2,4.5 H7" stroke="#444"/><path d="M4.5,2 V7" stroke="#444"/></svg>
<svg style="left:33px;top:445px" width="17" height="17" viewBox="0 0 17 17"><path d="M1,9 H8 M3,12 H8 M5,15 H8" stroke="#4a9fd0" stroke-width="1"/><rect x="10" y="0" width="6" height="6" fill="#bdbdbd"/><path d="M11,6 H15 V14 L13,17 L11,14Z" fill="#a8a8a8" stroke="#888" stroke-width=".5"/></svg>
<div class="t" style="left:55px;top:445px">进给和转速</div>
<div class="a" style="left:23px;top:473px;width:10px;height:0;border-top:1px dotted #9a9a9a"></div>
<svg style="left:33px;top:465px" width="17" height="17" viewBox="0 0 17 17"><path d="M4,1 H16 L13,15 H1Z" fill="#d9d92c" stroke="#333" stroke-width="1"/><path d="M5,5 H13 M4.5,8 H12.5 M4,11 H12" stroke="#333" stroke-width="1"/></svg>
<div class="t" style="left:55px;top:465px">历史</div>
<div class="a" style="left:23px;top:493px;width:10px;height:0;border-top:1px dotted #9a9a9a"></div>
<svg style="left:33px;top:485px" width="17" height="17" viewBox="0 0 17 17"><path d="M3,1 H14 V16 H3Z" fill="#f4f4f4" stroke="#b0b0b0" stroke-width="1"/><path d="M5,8 H9 M5,10.5 H8 M5,13 H9" stroke="#bdbdbd" stroke-width="1"/></svg>
<div class="t" style="left:55px;top:485px">便笺和描述</div>
<div class="a" style="left:23px;top:513px;width:10px;height:0;border-top:1px dotted #9a9a9a"></div>
<svg style="left:33px;top:505px" width="17" height="17" viewBox="0 0 17 17"><circle cx="7" cy="4" r="3.4" fill="#5a4a3a"/><path d="M1,16 Q1,8 7,8 Q13,8 13,16Z" fill="#2b6fd0"/><circle cx="12" cy="12.5" r="4.2" fill="#9ec3ee" stroke="#2b6fd0" stroke-width="1" stroke-dasharray="1.6 1"/><circle cx="12" cy="12.5" r="1.5" fill="#fff"/></svg>
<div class="t" style="left:55px;top:505px">用户定义设置</div>
<svg style="left:35px;top:660px" width="185" height="160" viewBox="380 780 185 160">
<defs><linearGradient id="pvT" x1="0" y1="0" x2="1" y2="1"><stop offset="0" stop-color="#ffffff"/><stop offset="1" stop-color="#f1f1f1"/></linearGradient>
<linearGradient id="pvL" x1="0" y1="0" x2="1" y2="0"><stop offset="0" stop-color="#dedede"/><stop offset="1" stop-color="#ededed"/></linearGradient>
<linearGradient id="pvR" x1="0" y1="0" x2="1" y2="0"><stop offset="0" stop-color="#d6d6d6"/><stop offset=".6" stop-color="#c2c2c2"/><stop offset="1" stop-color="#cdcdcd"/></linearGradient></defs>
<path d="M388.9,852.1 L458,896.2 L458,931.6 L390.5,885Z" fill="url(#pvL)" stroke="#c9c9c9" stroke-width="1"/>
<path d="M388.9,852.1 L427,830 L440,800 L480,801.7 L554.9,832.4 L458,896.2Z" fill="url(#pvT)"/>
<path d="M388.9,852.1 L425,831" stroke="#cfcfcf" stroke-width="1.2"/>
<path d="M458,896.2 L494.3,872.5 Q497,845 512,843 Q523,843 525,853.6 L554.9,832.4 L553.3,867.8 L458,931.6Z" fill="url(#pvR)"/>
<path d="M480,802 L554.9,832.4 L553.3,867.8" fill="none" stroke="#d8d8d8" stroke-width="1"/>
<path d="M428,832 L486,868 M438,812 L500,850" stroke="#e2d8d8" stroke-width=".8"/>
<g fill="none" stroke="#13956a" stroke-width="1.5"><path d="M429,826 Q421,846 440,856 Q466,872 487,869 Q494,850 517,839 Q512,822 497,818"/><path d="M437,822 Q431,842 447,851 Q466,862 481,861 Q488,846 508,836 Q504,826 492,822"/><path d="M446,816 Q441,838 455,845 Q466,851 476,852 Q484,840 500,832"/><path d="M453,812 Q451,834 463,840 Q470,838 478,836" stroke-dasharray="3 2"/></g>
<g fill="none" stroke="#e8aa22" stroke-width="1.3"><ellipse cx="472.3" cy="812.8" rx="49" ry="28"/><ellipse cx="472.3" cy="812.8" rx="47" ry="26.5"/><ellipse cx="473.5" cy="812.5" rx="38.5" ry="21.5"/><ellipse cx="473.5" cy="812.5" rx="36.5" ry="20"/><ellipse cx="475" cy="812" rx="29" ry="15.5"/><ellipse cx="475" cy="812" rx="27" ry="14"/><ellipse cx="476.5" cy="812" rx="20.5" ry="10.5"/><ellipse cx="476.5" cy="812" rx="18.5" ry="9"/></g>
</svg>
</div>
<div id="poi" class="a" style="left:1693px;top:2px;width:52px;height:540px;background:#f0f0f0;border:1px solid #9fa6ad;box-shadow:0 0 3px rgba(0,0,0,.35)">
<div class="a" style="left:0;top:0;width:50px;height:23px;background:#fdfdfd"></div>
<div class="t" style="left:2px;top:2px;font-size:13px;letter-spacing:-.2px;line-height:18px;height:18px;color:#111">Poi...</div>
<div class="a" style="left:31px;top:1px;width:20px;height:19px;background:#c8464c"></div>
<svg style="left:37.5px;top:7px" width="7" height="7" viewBox="0 0 7 7"><path d="M0.8,0.8 L6.2,6.2 M6.2,0.8 L0.8,6.2" stroke="#fff" stroke-width="1.6"/></svg>
<div class="a" style="left:1px;top:25px;width:49px;height:23px;background:#e8e8e8;border:1px solid #8a8a8a"></div>
<div class="a" style="left:4px;top:28px;width:43px;height:17px;border:1px dotted #222"></div>
<div class="t" style="left:13px;top:27px;font-size:14px;line-height:19px;height:19px;color:#111">退出</div>
<div class="a" style="left:1px;top:51px;width:23px;height:22px;background:#f8f8f8"></div>
<div class="a" style="left:11.4px;top:60.4px;width:3.2px;height:3.2px;border-radius:50%;background:#6e6e6e"></div>
<div class="a" style="left:33px;top:56.5px;width:8px;height:8px;border-radius:50%;background:#6e6e6e"></div>
<div class="a" style="left:5.7px;top:79px;width:12px;height:12px;border-radius:50%;background:#6e6e6e"></div>
<div class="a" style="left:29px;top:77px;width:16px;height:16px;border-radius:50%;background:#6e6e6e"></div>
<div class="a" style="left:2px;top:101px;width:47px;height:1px;background:#bdbdbd"></div>
<div class="a" style="left:3px;top:109px;width:19px;height:18px;background:linear-gradient(135deg,#ffb0b0 0%,#f03a3a 80%)"></div>
<div class="a" style="left:28px;top:109px;width:19px;height:18px;background:#ff0000"></div>
<div class="a" style="left:3px;top:132.9px;width:19px;height:18px;background:linear-gradient(135deg,#ffffc0 0%,#ffff40 70%)"></div>
<div class="a" style="left:28px;top:132.9px;width:19px;height:18px;background:#ffff00"></div>
<div class="a" style="left:3px;top:156.8px;width:19px;height:18px;background:linear-gradient(135deg,#fff 0%,#20e020 75%)"></div>
<div class="a" style="left:28px;top:156.8px;width:19px;height:18px;background:#00ff00"></div>
<div class="a" style="left:3px;top:180.7px;width:19px;height:18px;background:linear-gradient(135deg,#fff 0%,#2a2ad8 75%)"></div>
<div class="a" style="left:28px;top:180.7px;width:19px;height:18px;background:#0000ff"></div>
<div class="a" style="left:3px;top:204.6px;width:19px;height:18px;background:#fff"></div>
<div class="a" style="left:28px;top:204.6px;width:19px;height:18px;background:#000"></div>
<div class="a" style="left:25px;top:105.5px;width:25px;height:24px;border:1px solid #999;border-right-color:#fff;border-bottom-color:#fff"></div>
<div class="a" style="left:2px;top:229px;width:47px;height:1px;background:#bdbdbd"></div>
<div class="a" style="left:2px;top:406px;width:47px;height:1px;background:#bdbdbd"></div>
<div class="a" style="left:2px;top:437.5px;width:47px;height:1px;background:#bdbdbd"></div>
<div class="a" style="left:1px;top:234px;width:24px;height:25px;background:#f8f8f8;border:1px solid #999;border-right-color:#fff;border-bottom-color:#fff"></div>
<svg style="left:2px;top:237px" width="20" height="20" viewBox="0 0 20 20"><path d="M2,9 Q5,4 8,9 Q11,15 14,11 Q16,9 18,11" fill="none" stroke="#111" stroke-width="1.2"/></svg>
<svg style="left:27px;top:237px" width="20" height="20" viewBox="0 0 20 20"><path d="M4,13 L12,5 Q13.5,4 15,5.5 Q16.5,7 15.5,8.5 L8,16 H5Z" fill="#fff" stroke="#111" stroke-width="1"/><path d="M4,13 L7,10 L10.5,13.5 L8,16 H5Z" fill="#666"/></svg>
<svg style="left:2px;top:260px" width="20" height="20" viewBox="0 0 20 20"><path d="M2,14 L18,6" stroke="#111" stroke-width="1"/></svg>
<svg style="left:27px;top:260px" width="20" height="20" viewBox="0 0 20 20"><path d="M2,10 H18 M14,6.5 L18,10 L14,13.5" fill="none" stroke="#111" stroke-width="1"/></svg>
<svg style="left:2px;top:284px" width="20" height="20" viewBox="0 0 20 20"><rect x="2" y="5.5" width="16" height="9.5" fill="#f4f4f8" stroke="#111" stroke-width="1.1"/></svg>
<svg style="left:27px;top:284px" width="20" height="20" viewBox="0 0 20 20"><rect x="2" y="5.5" width="16" height="9.5" fill="#a6a6a6"/></svg>
<svg style="left:2px;top:308px" width="20" height="20" viewBox="0 0 20 20"><ellipse cx="10" cy="10" rx="8" ry="5" fill="#f8f8f8" stroke="#111" stroke-width="1.1"/></svg>
<svg style="left:27px;top:308px" width="20" height="20" viewBox="0 0 20 20"><ellipse cx="10" cy="10" rx="8" ry="5" fill="#a6a6a6"/></svg>
<svg style="left:2px;top:332px" width="20" height="20" viewBox="0 0 20 20"><path d="M2,10 H18 M5.5,6.5 L2,10 L5.5,13.5 M14.5,6.5 L18,10 L14.5,13.5" fill="none" stroke="#111" stroke-width="1"/></svg>
<div class="t" style="left:30px;top:332px;font-size:19px;line-height:20px;height:20px;color:#111">A</div>
<svg style="left:2px;top:356px" width="20" height="20" viewBox="0 0 20 20"><path d="M4,11 L8,15 L16,4" fill="none" stroke="#2cc02c" stroke-width="2"/></svg>
<svg style="left:27px;top:356px" width="20" height="20" viewBox="0 0 20 20"><path d="M6,6 L14,14 M14,6 L6,14" stroke="#e01818" stroke-width="2.4"/></svg>
<svg style="left:2px;top:380px" width="20" height="20" viewBox="0 0 20 20"><path d="M3,6 H15 V18 M1,16 H15 M5,4 V16" fill="none" stroke="#222" stroke-width="1" stroke-dasharray="1.5 1.2"/><path d="M15,2 V18 M1,16 H17" stroke="#444" stroke-width=".9"/></svg>
<svg style="left:27px;top:380px" width="20" height="20" viewBox="0 0 20 20"><rect x="3" y="3" width="11" height="9" fill="#eef" stroke="#666" stroke-width="1"/><path d="M8.5,5.5 V9.5 M6.5,7.5 H10.5" stroke="#333" stroke-width="1"/><path d="M13,12 L18,17" stroke="#888" stroke-width="2.4"/></svg>
<svg style="left:2px;top:412px" width="20" height="20" viewBox="0 0 20 20"><path d="M8,3 H12 V8 H17 V12 H12 V17 H8 V12 H3 V8 H8Z" fill="#aaa8f0" stroke="#6a68c8" stroke-width="1"/></svg>
<svg style="left:27px;top:412px" width="20" height="20" viewBox="0 0 20 20"><rect x="3" y="8" width="14" height="4" fill="#aaa8f0" stroke="#6a68c8" stroke-width="1"/></svg>
<svg style="left:2px;top:444.5px" width="20" height="20" viewBox="0 0 20 20"><path d="M5,10 Q10,4 15,8 Q18,12 13,16" fill="none" stroke="#444" stroke-width="1.8"/><path d="M3,6 L9,8.5 L4.5,13Z" fill="#444"/></svg>
<svg style="left:27px;top:444.5px" width="20" height="20" viewBox="0 0 20 20"><path d="M4,5 H16 M7.5,5 V3 H12.5 V5" fill="none" stroke="#222" stroke-width="1.4"/><path d="M5,6.5 H15 L14,18 H6Z" fill="#555" stroke="#222" stroke-width="1"/><path d="M8,8 V16 M10,8 V16 M12,8 V16" stroke="#ccc" stroke-width=".8"/></svg>
<svg style="left:2px;top:468px" width="20" height="20" viewBox="0 0 20 20"><path d="M4,2 H12 L16,6 V18 H4Z" fill="#fff" stroke="#111" stroke-width="1.2"/><path d="M12,2 V6 H16" fill="none" stroke="#111" stroke-width="1"/></svg>
<svg style="left:27px;top:468px" width="20" height="20" viewBox="0 0 20 20"><rect x="3" y="2" width="8" height="10" fill="#eef" stroke="#33a" stroke-width="1"/><rect x="8" y="7" width="9" height="11" fill="#eef" stroke="#33a" stroke-width="1"/><path d="M5,5 H9 M5,7.5 H8 M10,11 H15 M10,13.5 H15 M10,16 H14" stroke="#33a" stroke-width=".9"/></svg>
<svg style="left:2px;top:492px" width="20" height="20" viewBox="0 0 20 20"><path d="M5,8 L7,2 H15 L13,8Z" fill="#fff" stroke="#333" stroke-width="1"/><path d="M2,8 H18 V15 H2Z" fill="#8a92a0" stroke="#333" stroke-width="1"/><path d="M2,11 H18 M4,15 V17 H16 V15" stroke="#333" stroke-width="1" fill="none"/></svg>
<svg style="left:27px;top:492px" width="20" height="20" viewBox="0 0 20 20"><rect x="2.5" y="2.5" width="15" height="15" fill="#4a4a6a" stroke="#222" stroke-width="1"/><rect x="5" y="3" width="10" height="6" fill="#8a8ab0"/><rect x="6" y="12" width="8" height="5.5" fill="#d8d8e8"/><rect x="7" y="13" width="2.5" height="3.5" fill="#333"/></svg>
<svg style="left:2px;top:516.5px" width="20" height="20" viewBox="0 0 20 20"><rect x="5" y="4" width="13" height="11" fill="#aaa8e8" stroke="#55a" stroke-width="1"/><path d="M7,11 H12 M13,7 H16" stroke="#336" stroke-width="1"/><path d="M1,8 H3 M1,11 H3 M1,14 H3" stroke="#888" stroke-width="1"/></svg>
<svg style="left:27px;top:516.5px" width="20" height="20" viewBox="0 0 20 20"><circle cx="10" cy="10" r="8" fill="#22a8dc" stroke="#8ad8f0" stroke-width="1"/><circle cx="10" cy="5.8" r="1.5" fill="#fff"/><rect x="8.8" y="8.5" width="2.4" height="7" fill="#fff"/></svg>
</div>
<div class="a" style="left:1688px;top:21px;width:31px;height:31px;border-radius:50%;background:rgba(226,60,66,.66)"></div>
<svg style="left:1704px;top:35px" width="14" height="22" viewBox="0 0 14 22"><path d="M1,1 V17 L4.8,13.6 L7.8,20.5 L10.6,19.3 L7.6,12.6 L12.6,12.2Z" fill="#f6d2d4" stroke="#7a1010" stroke-width="1.1" stroke-linejoin="round"/></svg>
<div class="t" style="left:683px;top:957px;font-family:'Liberation Sans','Noto Sans CJK SC',sans-serif;font-weight:900;font-size:33.5px;line-height:40px;height:40px;color:#5d79a9;text-shadow:-1.5px -1.5px 0 #17266a,1.5px -1.5px 0 #17266a,-1.5px 1.5px 0 #17266a,1.5px 1.5px 0 #17266a,0 2px 0 #17266a,2px 0 0 #17266a,-2px 0 0 #17266a,0 -2px 0 #17266a;opacity:.9">纵然是咸鱼，也要做最咸的那一条<span style="letter-spacing:-1.6px">......</span></div>
<div class="t" style="left:1280px;top:957px;font-family:'Liberation Sans','Noto Sans CJK SC',sans-serif;font-weight:900;font-size:33.5px;line-height:40px;height:40px;color:#5d79a9;text-shadow:-1.5px -1.5px 0 #17266a,1.5px -1.5px 0 #17266a,-1.5px 1.5px 0 #17266a,1.5px 1.5px 0 #17266a,0 2px 0 #17266a,2px 0 0 #17266a,-2px 0 0 #17266a,0 -2px 0 #17266a;opacity:.9"><span style="letter-spacing:.8px">利剑数控编程</span><span style="letter-spacing:3px">--</span>烟熏鱼</div>
<div class="t" style="left:1627px;top:957px;font-family:'Liberation Sans','Noto Sans CJK SC',sans-serif;font-weight:900;font-size:33.5px;line-height:40px;height:40px;color:#5d79a9;text-shadow:-1.5px -1.5px 0 #17266a,1.5px -1.5px 0 #17266a,-1.5px 1.5px 0 #17266a,1.5px 1.5px 0 #17266a,0 2px 0 #17266a,2px 0 0 #17266a,-2px 0 0 #17266a,0 -2px 0 #17266a;opacity:.9">原创视频教程！</div>
</body></html>
